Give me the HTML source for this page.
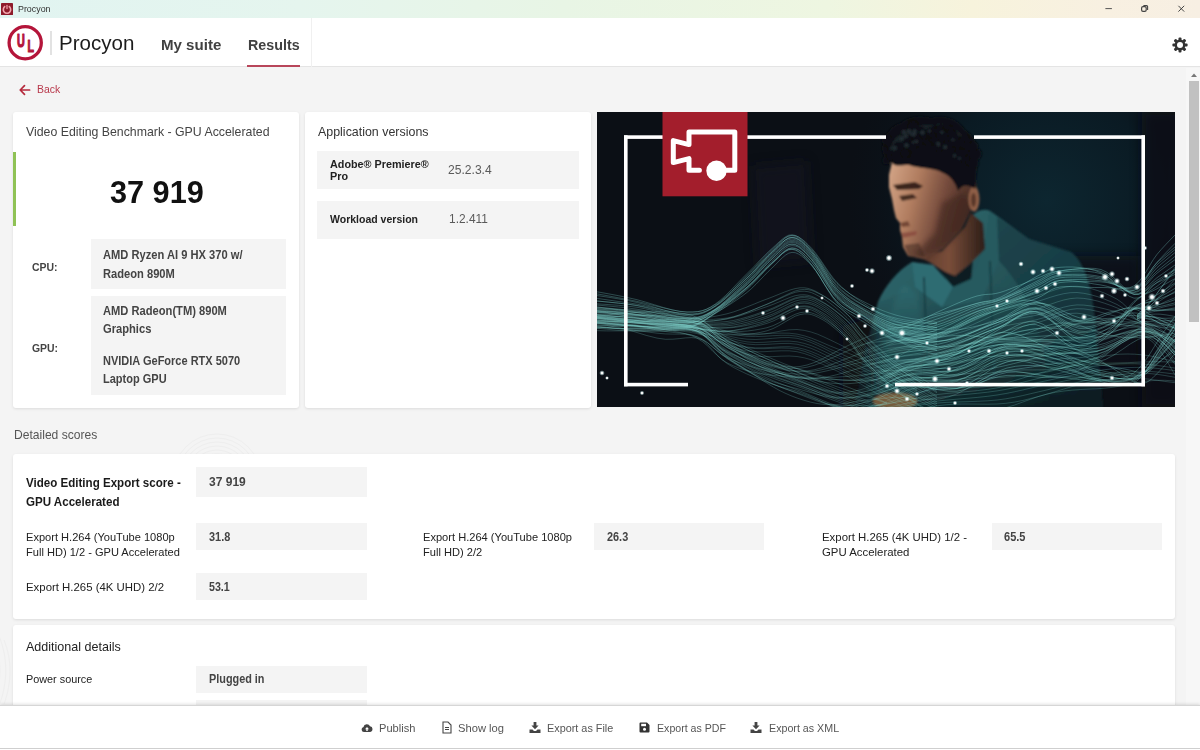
<!DOCTYPE html>
<html lang="en">
<head>
<meta charset="utf-8">
<title>Procyon</title>
<style>
*{box-sizing:border-box;margin:0;padding:0}
html,body{width:1200px;height:750px;overflow:hidden;background:#f4f4f4;font-family:"Liberation Sans","DejaVu Sans",sans-serif;color:#333}
.abs{position:absolute}
#titlebar{position:absolute;left:0;top:0;width:1200px;height:18px;background:linear-gradient(90deg,#e1f4f1 0%,#e5f5ee 25%,#e8f5e5 47%,#eef6e1 69%,#f7f3dc 81%,#f8f0e1 92%,#f7efe3 100%)}
#titlebar .t{position:absolute;left:18px;top:3px;font-size:9.5px;line-height:12px;color:#333}
#header{position:absolute;left:0;top:18px;width:1200px;height:49px;background:#fff;border-bottom:1px solid #e4e4e4}
#navsep{position:absolute;left:311px;top:18px;width:1px;height:49px;background:#f0f0f0}
.nav{position:absolute;top:36px;font-weight:bold;font-size:14.5px;line-height:18px;color:#3c3c3c;white-space:nowrap}
#content{position:absolute;left:0;top:68px;width:1186px;height:638px;background:#f4f4f4}
.card{position:absolute;background:#fff;border-radius:3px;box-shadow:0 1px 3px rgba(0,0,0,.10)}
.box{position:absolute;background:#f4f4f4}
.h{position:absolute;font-size:13px;line-height:16px;color:#3a3a3a;white-space:nowrap}
.b{position:absolute;font-weight:bold;font-size:11.5px;line-height:19px;color:#3f3f3f;white-space:nowrap}
.l{position:absolute;font-size:12px;line-height:15.5px;color:#222;white-space:nowrap}
.v{position:absolute;font-size:13px;line-height:16px;color:#555;white-space:nowrap}
#footer{position:absolute;left:0;top:705px;width:1200px;height:45px;background:#fff;border-top:1px solid #d6d6d6;box-shadow:0 -1px 3px rgba(0,0,0,.12)}
.f{position:absolute;top:721px;font-size:12px;line-height:14px;color:#555;white-space:nowrap}
.tx{position:absolute;white-space:nowrap;transform-origin:0 0}
</style>
</head>
<body>
<!-- title bar -->
<div id="titlebar">
  <svg class="abs" style="left:1px;top:2.700px" width="12" height="12.300" viewBox="0 0 12 12.300"><rect width="12" height="12.300" rx=".8" fill="#8e1b2b"/><path d="M4.300 3.300A3.700 3.700 0 1 0 7.700 3.300" fill="none" stroke="#f3a6ae" stroke-width="1.600" stroke-linecap="butt"/><rect x="5.400" y="1.900" width="1.200" height="4.200" fill="#f3a6ae"/></svg>
  <svg class="abs" style="left:1100px;top:0" width="100" height="18" viewBox="0 0 100 18"><path d="M5.400 8.600h6.500" stroke="#555" stroke-width="1"/><rect x="41.600" y="6.600" width="4.600" height="4.800" rx="1.400" fill="none" stroke="#444" stroke-width="1.200"/><path d="M43.400 5.600h3.200a1 1 0 0 1 1 1v3.400" fill="none" stroke="#444" stroke-width="1.100"/><path d="M78.400 5.800l5.800 5.800M84.200 5.800l-5.800 5.800" stroke="#444" stroke-width="1"/></svg>
</div>
<!-- header -->
<div id="header"></div>
<div id="navsep"></div>
<svg class="abs" style="left:6px;top:24px" width="38" height="38" viewBox="0 0 38 38"><circle cx="19.200" cy="18.700" r="16.100" fill="none" stroke="#b4153a" stroke-width="3.300"/><text transform="translate(11,22.700) scale(.58,.96)" style="font-family:'Liberation Sans',sans-serif;font-weight:bold;font-size:18.600px" fill="#b4153a" stroke="#b4153a" stroke-width="1" vector-effect="non-scaling-stroke" stroke-linejoin="round">U</text><text transform="translate(21.600,27.700) scale(.6,.96)" style="font-family:'Liberation Sans',sans-serif;font-weight:bold;font-size:17.700px" fill="#b4153a" stroke="#b4153a" stroke-width="1" vector-effect="non-scaling-stroke" stroke-linejoin="round">L</text></svg>
<div class="abs" style="left:50px;top:31px;width:2px;height:24px;background:#e2e2e2"></div>
<div class="abs" style="left:247.200px;top:65.200px;width:52.400px;height:2.200px;background:#b8465a"></div>
<svg class="abs" style="left:1171.400px;top:36.100px" width="18" height="18" viewBox="0 0 18 18"><g fill="#333"><circle cx="9" cy="9" r="5.400"/><rect x="7.500" y="1.400" width="3" height="15.200" rx="1" transform="rotate(0 9 9)"/><rect x="7.500" y="1.400" width="3" height="15.200" rx="1" transform="rotate(45 9 9)"/><rect x="7.500" y="1.400" width="3" height="15.200" rx="1" transform="rotate(90 9 9)"/><rect x="7.500" y="1.400" width="3" height="15.200" rx="1" transform="rotate(135 9 9)"/></g><circle cx="9" cy="9" r="3" fill="#fff"/></svg>

<!-- content -->
<div id="content"></div>
<svg id="wm" class="abs" style="left:0;top:68px" width="1186" height="638" viewBox="0 68 1186 638"><g fill="none" stroke="#eeeeee" stroke-width="1"><circle cx="217" cy="478" r="24"/><circle cx="217" cy="478" r="28"/><circle cx="217" cy="478" r="32"/><circle cx="217" cy="478" r="36"/><circle cx="217" cy="478" r="40"/><circle cx="217" cy="478" r="44"/><path d="M-6 640c8 20 8 40 0 62M-1 636c9 22 9 46 0 70M4 640c8 20 8 42 0 64"/></g></svg>
<svg class="abs" style="left:18px;top:83.700px" width="14" height="12" viewBox="0 0 14 12"><path d="M11.600 6H2.600M6.500 1.700L2.200 6l4.300 4.300" fill="none" stroke="#b52a3c" stroke-width="1.700" stroke-linecap="round" stroke-linejoin="round"/></svg>

<!-- card 1 -->
<div class="card" style="left:13px;top:111.700px;width:285.500px;height:296px"></div>
<div class="abs" style="left:13px;top:152px;width:3px;height:74px;background:#8fc255"></div>
<div class="box" style="left:91px;top:239px;width:195px;height:50px"></div>
<div class="box" style="left:91px;top:296px;width:195px;height:99px"></div>

<!-- card 2 -->
<div class="card" style="left:305px;top:111.700px;width:286px;height:296px"></div>
<div class="box" style="left:317px;top:151px;width:262px;height:38px"></div>
<div class="box" style="left:317px;top:201px;width:262px;height:38px"></div>

<!-- hero image -->
<div class="abs" id="hero" style="left:597px;top:111.600px;width:577.800px;height:295.600px;background:#0a131b;overflow:hidden"><div style="position:absolute;left:0;top:-0.600px"><svg width="578" height="297" viewBox="0 0 578 297" style="display:block">
<defs>
<radialGradient id="bgg" cx="450" cy="90" r="200" gradientUnits="userSpaceOnUse"><stop offset="0" stop-color="#0d2630"/><stop offset="0.55" stop-color="#0a1a23"/><stop offset="1" stop-color="#0a121a" stop-opacity="0"/></radialGradient>
<linearGradient id="face" x1="290" y1="70" x2="385" y2="95" gradientUnits="userSpaceOnUse"><stop offset="0" stop-color="#d2a385"/><stop offset="0.3" stop-color="#b07c5f"/><stop offset="0.62" stop-color="#71483a"/><stop offset="1" stop-color="#37231d"/></linearGradient>
<linearGradient id="neck" x1="325" y1="0" x2="392" y2="0" gradientUnits="userSpaceOnUse"><stop offset="0" stop-color="#5e3b2d"/><stop offset="0.4" stop-color="#7a4e3a"/><stop offset="1" stop-color="#241814"/></linearGradient>
<linearGradient id="hood" x1="300" y1="130" x2="470" y2="320" gradientUnits="userSpaceOnUse"><stop offset="0" stop-color="#2f676c"/><stop offset="0.45" stop-color="#235055"/><stop offset="1" stop-color="#112d32"/></linearGradient>
<linearGradient id="armsh" x1="255" y1="0" x2="300" y2="0" gradientUnits="userSpaceOnUse"><stop offset="0" stop-color="#0b1016" stop-opacity=".9"/><stop offset="1" stop-color="#0b1016" stop-opacity="0"/></linearGradient>
<linearGradient id="hdark" x1="0" y1="175" x2="0" y2="297" gradientUnits="userSpaceOnUse"><stop offset="0" stop-color="#081014" stop-opacity="0"/><stop offset="1" stop-color="#081014" stop-opacity=".62"/></linearGradient>
<radialGradient id="glow"><stop offset="0" stop-color="#fff" stop-opacity="1"/><stop offset="0.35" stop-color="#fff" stop-opacity=".85"/><stop offset="1" stop-color="#bff" stop-opacity="0"/></radialGradient>
<filter id="b1" x="-10%" y="-10%" width="120%" height="120%"><feGaussianBlur stdDeviation="1.1"/></filter>
<filter id="b2" x="-40%" y="-40%" width="180%" height="180%"><feGaussianBlur stdDeviation="2.5"/></filter>
<filter id="b3" x="-60%" y="-60%" width="220%" height="220%"><feGaussianBlur stdDeviation="6"/></filter>
</defs>
<rect width="578" height="297" fill="#0b0f15"/>
<rect width="578" height="297" fill="url(#bgg)"/>
<rect x="418" y="145" width="125" height="110" fill="#090f15" opacity=".75" filter="url(#b3)"/>
<rect x="545" y="0" width="40" height="297" fill="#0a0f16" opacity=".8" filter="url(#b3)"/>
<path d="M155,55 L210,50 L215,150 L160,155 Z" fill="#141920" opacity=".55" filter="url(#b3)"/>
<g filter="url(#b1)">
<path d="M372,108 C380,98 390,96 396,102 L432,128 L474,141 C486,150 493,170 497,200 L506,297 L258,297 L268,240 L281,191 C288,175 300,160 315,151 L347,169 L368,164 Z" fill="url(#hood)"/>
<path d="M322,146 L345,140 L368,116 L374,102 L386,112 L388,138 L374,152 L358,165 L346,160 L334,152 Z" fill="url(#neck)"/>
<path d="M343,158 L358,166 L376,150 L374,170 L356,178 Z" fill="#0d1d24"/>
<path d="M315,151 L336,154 L356,176 L374,168 L388,138 L392,100 L400,106 L402,150 L384,190 L345,196 L318,176 Z" fill="#265a5f"/>
<path d="M315,151 L336,154 L356,176 L345,196 L318,176 Z" fill="#33737a" opacity=".7"/>
<path d="M400,106 L432,128 L474,141 C486,150 493,170 497,200 L506,297 L452,297 C452,240 436,185 402,150 Z" fill="#12323a" opacity=".55"/>
<path d="M306,174 L320,182 L330,230 L310,297 L284,297 L288,235 L294,200 Z" fill="#35787d" opacity=".4" filter="url(#b2)"/>
<path d="M246,215 L280,205 L276,300 L246,300 Z" fill="#0b1016" opacity=".75" filter="url(#b3)"/>
<path d="M281,191 L268,240 L258,297 L506,297 L497,200 C493,180 488,160 474,141 L432,128 L402,150 L384,190 L345,196 L318,176 Z" fill="url(#hdark)"/>
<path d="M327,166 L330,250" stroke="#173a40" stroke-width="1.6" fill="none"/><path d="M393,150 L397,262" stroke="#173a40" stroke-width="1.6" fill="none"/>
<path d="M295,51 L292,64 L292,76 L295,88 L297,99 L299,107 L303,112 L303,119 L305,126 L306,136 L311,145 L327,148 L346,138 L364,119 L372,103 L380,84 L378,60 L360,46 L320,44 Z" fill="url(#face)"/>
<path d="M345,92 L368,80 L374,100 L364,119 L346,138 L327,148 L318,142 L338,122 Z" fill="#3a241d" opacity=".55" filter="url(#b2)"/>
<ellipse cx="377" cy="88" rx="5.500" ry="12.500" fill="#8f5e47"/><ellipse cx="376.500" cy="89" rx="2.500" ry="7" fill="#5a3729"/>
<path d="M295,52 C288,48 283,40 286,33 C288,22 296,14 304,12 C314,4 326,5 334,7 C350,3 362,10 368,19 C380,26 384,42 380,56 L378,78 C372,74 366,72 361,80 C358,70 352,64 346,62 C336,56 322,58 312,54 C304,54 298,56 295,52 Z" fill="#0b0e12"/>
<path d="M292,38 C298,22 316,12 338,14 C326,20 308,26 300,44 Z" fill="#1b252a" opacity=".85"/>
<path d="M340,12 C356,12 370,24 374,40 C364,30 352,24 340,22 Z" fill="#141c21" opacity=".9"/>
<g fill="#0b0e12"><circle cx="309.9" cy="30.3" r="4.3"/><circle cx="343.6" cy="28.4" r="3.2"/><circle cx="289.2" cy="49.5" r="3.9"/><circle cx="309.6" cy="42.2" r="4.6"/><circle cx="365.0" cy="33.9" r="5.2"/><circle cx="301.9" cy="36.7" r="6.0"/><circle cx="336.1" cy="29.7" r="5.3"/><circle cx="293.9" cy="44.5" r="5.1"/><circle cx="315.7" cy="14.6" r="6.0"/><circle cx="331.5" cy="28.7" r="6.1"/><circle cx="353.7" cy="39.8" r="4.4"/><circle cx="361.7" cy="31.3" r="6.3"/><circle cx="368.9" cy="26.3" r="3.5"/><circle cx="308.0" cy="42.2" r="4.5"/><circle cx="345.7" cy="20.6" r="4.8"/><circle cx="323.5" cy="20.5" r="5.0"/><circle cx="341.8" cy="35.1" r="5.4"/><circle cx="373.5" cy="48.9" r="6.5"/><circle cx="349.8" cy="18.5" r="6.0"/><circle cx="376.7" cy="52.4" r="5.0"/><circle cx="353.7" cy="21.4" r="5.9"/><circle cx="340.8" cy="18.8" r="3.2"/><circle cx="366.6" cy="48.2" r="3.3"/><circle cx="361.7" cy="30.4" r="3.5"/><circle cx="315.0" cy="34.1" r="6.1"/><circle cx="292.1" cy="41.9" r="3.2"/><circle cx="354.1" cy="24.7" r="6.1"/><circle cx="378.2" cy="43.0" r="6.5"/><circle cx="316.5" cy="15.5" r="5.1"/><circle cx="290.9" cy="31.8" r="4.4"/><circle cx="344.2" cy="16.4" r="3.1"/><circle cx="367.8" cy="31.3" r="6.4"/><circle cx="370.5" cy="34.6" r="4.6"/><circle cx="335.8" cy="27.1" r="5.1"/><circle cx="339.5" cy="27.2" r="6.3"/><circle cx="334.6" cy="21.4" r="5.5"/><circle cx="309.9" cy="24.0" r="6.4"/><circle cx="335.9" cy="24.6" r="3.0"/><circle cx="326.2" cy="25.8" r="3.1"/><circle cx="344.7" cy="28.9" r="3.2"/><circle cx="345.7" cy="24.9" r="5.4"/><circle cx="320.4" cy="30.6" r="5.6"/><circle cx="290.0" cy="28.8" r="5.4"/><circle cx="376.6" cy="35.3" r="4.6"/><circle cx="342.5" cy="20.1" r="4.3"/><circle cx="316.8" cy="23.0" r="5.1"/></g>
<g fill="#27343a" opacity=".8"><circle cx="317.0" cy="23.2" r="2.2"/><circle cx="297.9" cy="36.9" r="2.2"/><circle cx="317.7" cy="20.2" r="2.2"/><circle cx="312.7" cy="21.5" r="1.8"/><circle cx="344.9" cy="21.2" r="1.6"/><circle cx="319.4" cy="30.6" r="1.8"/><circle cx="355.9" cy="28.8" r="1.6"/><circle cx="341.5" cy="33.7" r="1.8"/><circle cx="311.8" cy="20.8" r="1.9"/><circle cx="309.4" cy="34.3" r="2.3"/><circle cx="308.9" cy="25.0" r="2.2"/><circle cx="340.9" cy="32.1" r="1.6"/><circle cx="305.1" cy="27.3" r="2.2"/><circle cx="315.0" cy="23.4" r="1.7"/><circle cx="325.4" cy="21.6" r="2.4"/><circle cx="306.9" cy="21.1" r="2.4"/><circle cx="357.6" cy="44.7" r="1.8"/><circle cx="362.5" cy="47.2" r="1.5"/><circle cx="348.2" cy="36.2" r="2.1"/><circle cx="332.3" cy="19.9" r="1.6"/><circle cx="311.9" cy="19.7" r="2.0"/><circle cx="316.1" cy="31.3" r="1.3"/></g>
<path d="M296,74 L318,71 L326,75 L322,78 L300,79 Z" fill="#24140f" opacity=".85"/>
<path d="M302,85 L316,83 L320,87 L305,90 Z" fill="#2a1812" opacity=".8"/>
<path d="M303,112 L311,110 L313,115 L305,116 Z" fill="#5a3024" opacity=".7"/>
<path d="M304,122 L320,120 L319,124 L306,127 Z" fill="#8a4b40" opacity=".85"/>
<path d="M307,134 L322,132 L328,146 L312,146 Z" fill="#3b261e" opacity=".5"/>
<ellipse cx="298" cy="290" rx="22" ry="8" fill="#80603f" opacity=".9"/>
</g>
<g><path d="M-10.0,179.3 -4.6,180.1 3.0,181.3 11.9,182.9 21.5,184.7 31.1,186.7 40.0,188.7 48.6,191.1 57.5,193.8 66.4,196.5 75.0,198.8 82.9,200.4 90.0,201.2 95.9,201.1 100.8,200.7 105.1,199.8 109.2,198.3 113.4,196.1 118.0,193.2 123.2,189.3 128.6,184.4 134.2,178.8 139.7,173.1 145.0,167.6 150.0,162.6 154.6,158.0 159.0,153.5 163.2,149.0 167.3,144.8 171.2,140.9 175.0,137.5 178.6,134.2 182.0,131.0 185.3,128.1 188.5,125.8 191.7,124.2 195.0,123.8 198.3,124.4 201.5,126.0 204.7,128.4 208.0,131.4 211.4,135.0 215.0,138.9 218.8,143.6 222.9,149.3 227.0,155.5 231.3,161.8 235.6,167.6 240.0,172.5 244.4,176.5 249.0,180.1 253.6,183.3 258.3,186.1 263.1,188.8 268.0,191.4 273.0,193.9 278.1,196.3 283.2,198.6 288.6,200.7 294.2,202.6 300.0,204.4 306.7,206.0 314.2,207.5 322.0,208.7 329.3,209.8 335.6,210.7 340.0,211.3 M-10.0,181.3 -4.6,182.2 3.0,183.4 11.9,185.0 21.5,186.8 31.1,188.6 40.0,190.4 48.6,192.4 57.5,194.7 66.4,196.9 75.0,198.9 82.9,200.3 90.0,200.9 95.9,200.9 100.8,200.6 105.1,199.7 109.2,198.4 113.4,196.4 118.0,193.8 123.2,190.3 128.6,185.8 134.2,180.7 139.7,175.4 145.0,170.2 150.0,165.4 154.6,160.9 159.0,156.4 163.2,151.9 167.3,147.6 171.2,143.5 175.0,139.8 178.6,136.3 182.0,132.8 185.3,129.6 188.5,126.9 191.7,125.1 195.0,124.3 198.3,124.6 201.5,125.9 204.7,128.0 208.0,130.7 211.4,134.0 215.0,137.7 218.8,142.3 222.9,147.9 227.0,154.1 231.3,160.4 235.6,166.3 240.0,171.5 244.4,175.8 249.0,179.7 253.6,183.4 258.3,186.8 263.1,190.0 268.0,193.2 273.0,196.4 278.1,199.4 283.2,202.2 288.6,204.7 294.2,207.0 300.0,208.9 306.7,210.4 314.2,211.5 322.0,212.0 329.3,212.2 335.6,212.3 340.0,212.3 M-10.0,183.2 -4.6,184.0 3.0,185.0 11.9,186.3 21.5,187.9 31.1,189.6 40.0,191.5 48.6,193.6 57.5,196.2 66.4,198.9 75.0,201.1 82.9,202.8 90.0,203.5 95.9,203.4 100.8,202.9 105.1,201.9 109.2,200.2 113.4,198.0 118.0,195.0 123.2,191.1 128.6,186.2 134.2,180.7 139.7,175.0 145.0,169.4 150.0,164.4 154.6,159.7 159.0,155.0 163.2,150.4 167.3,146.1 171.2,142.1 175.0,138.5 178.6,135.2 182.0,131.9 185.3,129.0 188.5,126.6 191.7,125.1 195.0,124.7 198.3,125.4 201.5,127.0 204.7,129.5 208.0,132.6 211.4,136.4 215.0,140.5 218.8,145.4 222.9,151.4 227.0,157.9 231.3,164.4 235.6,170.5 240.0,175.7 244.4,180.0 249.0,183.7 253.6,186.9 258.3,189.9 263.1,192.6 268.0,195.2 273.0,197.7 278.1,200.1 283.2,202.2 288.6,204.2 294.2,205.9 300.0,207.4 306.7,208.7 314.2,209.8 322.0,210.7 329.3,211.6 335.6,212.4 340.0,213.0 M-10.0,185.9 -4.6,186.7 3.0,187.8 11.9,189.1 21.5,190.5 31.1,191.8 40.0,193.2 48.6,194.9 57.5,196.9 66.4,199.0 75.0,200.9 82.9,202.3 90.0,202.9 95.9,202.9 100.8,202.4 105.1,201.4 109.2,199.9 113.4,197.9 118.0,195.2 123.2,191.7 128.6,187.2 134.2,182.2 139.7,176.9 145.0,171.8 150.0,167.0 154.6,162.5 159.0,158.0 163.2,153.4 167.3,149.1 171.2,145.0 175.0,141.4 178.6,137.9 182.0,134.5 185.3,131.4 188.5,128.8 191.7,127.0 195.0,126.3 198.3,126.8 201.5,128.1 204.7,130.3 208.0,133.2 211.4,136.6 215.0,140.5 218.8,145.2 222.9,150.9 227.0,157.2 231.3,163.5 235.6,169.5 240.0,174.6 244.4,178.8 249.0,182.5 253.6,185.9 258.3,189.0 263.1,192.0 268.0,195.0 273.0,198.0 278.1,200.8 283.2,203.6 288.6,206.1 294.2,208.4 300.0,210.5 306.7,212.3 314.2,213.8 322.0,215.0 329.3,215.9 335.6,216.4 340.0,216.9 M-10.0,188.8 -4.6,189.5 3.0,190.3 11.9,191.2 21.5,192.2 31.1,193.2 40.0,194.4 48.6,196.0 57.5,198.0 66.4,200.2 75.0,202.1 82.9,203.6 90.0,204.2 95.9,204.1 100.8,203.5 105.1,202.5 109.2,200.8 113.4,198.6 118.0,195.8 123.2,192.2 128.6,187.6 134.2,182.5 139.7,177.1 145.0,171.8 150.0,167.0 154.6,162.4 159.0,157.7 163.2,153.1 167.3,148.8 171.2,144.7 175.0,141.1 178.6,137.7 182.0,134.3 185.3,131.3 188.5,128.9 191.7,127.2 195.0,126.7 198.3,127.3 201.5,128.9 204.7,131.3 208.0,134.4 211.4,138.0 215.0,142.1 218.8,147.1 222.9,153.1 227.0,159.7 231.3,166.3 235.6,172.5 240.0,177.7 244.4,182.1 249.0,185.8 253.6,189.2 258.3,192.2 263.1,195.0 268.0,197.8 273.0,200.5 278.1,203.1 283.2,205.5 288.6,207.7 294.2,209.6 300.0,211.3 306.7,212.6 314.2,213.7 322.0,214.6 329.3,215.3 335.6,215.9 340.0,216.5 M-10.0,189.3 -4.6,189.7 3.0,190.3 11.9,191.1 21.5,192.1 31.1,193.3 40.0,194.7 48.6,196.6 57.5,199.0 66.4,201.5 75.0,203.9 82.9,205.6 90.0,206.4 95.9,206.4 100.8,205.9 105.1,204.8 109.2,203.1 113.4,200.9 118.0,198.1 123.2,194.4 128.6,189.7 134.2,184.5 139.7,179.1 145.0,173.6 150.0,168.6 154.6,163.8 159.0,159.0 163.2,154.2 167.3,149.6 171.2,145.4 175.0,141.6 178.6,138.0 182.0,134.6 185.3,131.4 188.5,128.8 191.7,127.1 195.0,126.5 198.3,127.0 201.5,128.5 204.7,130.9 208.0,134.0 211.4,137.6 215.0,141.8 218.8,146.8 222.9,152.8 227.0,159.5 231.3,166.3 235.6,172.6 240.0,178.0 244.4,182.5 249.0,186.4 253.6,189.9 258.3,193.1 263.1,196.1 268.0,199.1 273.0,202.0 278.1,204.8 283.2,207.4 288.6,209.7 294.2,211.9 300.0,213.7 306.7,215.1 314.2,216.3 322.0,217.2 329.3,217.9 335.6,218.5 340.0,218.9 M-10.0,192.1 -4.6,192.5 3.0,193.0 11.9,193.6 21.5,194.3 31.1,195.2 40.0,196.3 48.6,197.9 57.5,200.0 66.4,202.4 75.0,204.6 82.9,206.2 90.0,207.0 95.9,206.9 100.8,206.3 105.1,205.2 109.2,203.5 113.4,201.2 118.0,198.4 123.2,194.7 128.6,190.1 134.2,185.0 139.7,179.7 145.0,174.4 150.0,169.4 154.6,164.7 159.0,159.9 163.2,155.2 167.3,150.7 171.2,146.5 175.0,142.8 178.6,139.3 182.0,135.9 185.3,132.8 188.5,130.3 191.7,128.6 195.0,128.0 198.3,128.6 201.5,130.2 204.7,132.6 208.0,135.7 211.4,139.4 215.0,143.6 218.8,148.6 222.9,154.7 227.0,161.4 231.3,168.1 235.6,174.3 240.0,179.6 244.4,184.0 249.0,187.7 253.6,191.0 258.3,193.9 263.1,196.7 268.0,199.5 273.0,202.2 278.1,204.9 283.2,207.5 288.6,209.8 294.2,212.0 300.0,213.9 306.7,215.6 314.2,217.1 322.0,218.4 329.3,219.6 335.6,220.6 340.0,221.4 M-10.0,193.2 -4.6,193.7 3.0,194.3 11.9,195.1 21.5,196.0 31.1,197.0 40.0,198.2 48.6,199.7 57.5,201.7 66.4,203.8 75.0,205.7 82.9,207.1 90.0,207.7 95.9,207.5 100.8,206.7 105.1,205.5 109.2,203.7 113.4,201.4 118.0,198.6 123.2,195.1 128.6,190.7 134.2,185.8 139.7,180.7 145.0,175.7 150.0,170.9 154.6,166.3 159.0,161.6 163.2,156.9 167.3,152.4 171.2,148.2 175.0,144.5 178.6,141.0 182.0,137.5 185.3,134.3 188.5,131.7 191.7,130.0 195.0,129.3 198.3,129.8 201.5,131.2 204.7,133.5 208.0,136.5 211.4,140.1 215.0,144.1 218.8,149.1 222.9,155.1 227.0,161.7 231.3,168.3 235.6,174.6 240.0,179.9 244.4,184.2 249.0,188.0 253.6,191.3 258.3,194.3 263.1,197.3 268.0,200.2 273.0,203.2 278.1,206.1 283.2,208.9 288.6,211.5 294.2,213.9 300.0,216.0 306.7,217.8 314.2,219.4 322.0,220.8 329.3,221.9 335.6,222.8 340.0,223.5 M-10.0,195.2 -4.6,195.7 3.0,196.4 11.9,197.2 21.5,198.1 31.1,199.1 40.0,200.1 48.6,201.5 57.5,203.3 66.4,205.2 75.0,206.9 82.9,208.1 90.0,208.5 95.9,208.1 100.8,207.3 105.1,205.9 109.2,204.0 113.4,201.7 118.0,198.8 123.2,195.3 128.6,191.0 134.2,186.3 139.7,181.3 145.0,176.3 150.0,171.6 154.6,167.1 159.0,162.4 163.2,157.8 167.3,153.3 171.2,149.2 175.0,145.4 178.6,141.9 182.0,138.5 185.3,135.3 188.5,132.8 191.7,131.0 195.0,130.4 198.3,130.9 201.5,132.4 204.7,134.7 208.0,137.7 211.4,141.3 215.0,145.4 218.8,150.3 222.9,156.4 227.0,163.1 231.3,169.8 235.6,176.1 240.0,181.4 244.4,185.7 249.0,189.5 253.6,192.8 258.3,195.8 263.1,198.7 268.0,201.6 273.0,204.6 278.1,207.5 283.2,210.3 288.6,212.9 294.2,215.2 300.0,217.3 306.7,219.2 314.2,220.7 322.0,222.1 329.3,223.2 335.6,224.2 340.0,224.9 M-10.0,196.9 -4.6,197.4 3.0,198.1 11.9,198.8 21.5,199.7 31.1,200.7 40.0,201.7 48.6,203.0 57.5,204.8 66.4,206.5 75.0,208.1 82.9,209.2 90.0,209.5 95.9,209.1 100.8,208.1 105.1,206.6 109.2,204.7 113.4,202.2 118.0,199.3 123.2,195.8 128.6,191.6 134.2,186.9 139.7,182.0 145.0,177.1 150.0,172.5 154.6,167.9 159.0,163.3 163.2,158.7 167.3,154.2 171.2,150.1 175.0,146.4 178.6,142.9 182.0,139.5 185.3,136.4 188.5,133.8 191.7,132.1 195.0,131.4 198.3,132.0 201.5,133.4 204.7,135.8 208.0,138.8 211.4,142.4 215.0,146.5 218.8,151.5 222.9,157.6 227.0,164.3 231.3,171.0 235.6,177.3 240.0,182.7 244.4,187.0 249.0,190.7 253.6,193.9 258.3,196.9 263.1,199.7 268.0,202.6 273.0,205.6 278.1,208.6 283.2,211.4 288.6,214.1 294.2,216.5 300.0,218.7 306.7,220.6 314.2,222.2 322.0,223.7 329.3,225.0 335.6,226.0 340.0,226.8 M-10.0,199.0 -4.6,199.5 3.0,200.1 11.9,200.8 21.5,201.7 31.1,202.5 40.0,203.4 48.6,204.6 57.5,206.1 66.4,207.7 75.0,209.0 82.9,209.9 90.0,210.1 95.9,209.5 100.8,208.4 105.1,206.8 109.2,204.7 113.4,202.3 118.0,199.4 123.2,195.9 128.6,191.8 134.2,187.3 139.7,182.6 145.0,177.8 150.0,173.3 154.6,168.9 159.0,164.4 163.2,159.8 167.3,155.5 171.2,151.4 175.0,147.7 178.6,144.3 182.0,140.9 185.3,137.8 188.5,135.2 191.7,133.5 195.0,132.9 198.3,133.4 201.5,134.9 204.7,137.2 208.0,140.3 211.4,143.9 215.0,147.9 218.8,152.9 222.9,159.0 227.0,165.7 231.3,172.5 235.6,178.8 240.0,184.1 244.4,188.3 249.0,191.9 253.6,195.1 258.3,198.0 263.1,200.8 268.0,203.7 273.0,206.7 278.1,209.6 283.2,212.5 288.6,215.2 294.2,217.7 300.0,219.9 306.7,221.9 314.2,223.6 322.0,225.2 329.3,226.5 335.6,227.6 340.0,228.5 M-10.0,200.5 -4.6,200.9 3.0,201.4 11.9,202.0 21.5,202.7 31.1,203.6 40.0,204.6 48.6,205.9 57.5,207.5 66.4,209.2 75.0,210.7 82.9,211.7 90.0,211.9 95.9,211.2 100.8,210.0 105.1,208.3 109.2,206.2 113.4,203.6 118.0,200.6 123.2,197.0 128.6,192.8 134.2,188.2 139.7,183.4 145.0,178.6 150.0,174.0 154.6,169.5 159.0,164.9 163.2,160.3 167.3,155.8 171.2,151.7 175.0,148.1 178.6,144.6 182.0,141.2 185.3,138.1 188.5,135.6 191.7,133.9 195.0,133.3 198.3,133.9 201.5,135.5 204.7,137.9 208.0,141.0 211.4,144.7 215.0,148.9 218.8,154.0 222.9,160.2 227.0,167.0 231.3,173.8 235.6,180.2 240.0,185.5 244.4,189.8 249.0,193.4 253.6,196.5 258.3,199.3 263.1,202.1 268.0,204.9 273.0,207.8 278.1,210.8 283.2,213.6 288.6,216.3 294.2,218.8 300.0,221.0 306.7,223.0 314.2,224.9 322.0,226.6 329.3,228.2 335.6,229.5 340.0,230.5 M-10.0,202.7 -4.6,203.3 3.0,204.1 11.9,204.9 21.5,205.7 31.1,206.4 40.0,207.0 48.6,207.8 57.5,208.8 66.4,209.9 75.0,210.9 82.9,211.5 90.0,211.5 95.9,210.8 100.8,209.6 105.1,207.9 109.2,205.8 113.4,203.4 118.0,200.6 123.2,197.4 128.6,193.6 134.2,189.3 139.7,184.9 145.0,180.4 150.0,176.1 154.6,171.7 159.0,167.2 163.2,162.6 167.3,158.2 171.2,154.0 175.0,150.2 178.6,146.7 182.0,143.1 185.3,139.9 188.5,137.2 191.7,135.3 195.0,134.6 198.3,135.0 201.5,136.3 204.7,138.5 208.0,141.4 211.4,145.0 215.0,149.0 218.8,154.0 222.9,160.1 227.0,166.8 231.3,173.6 235.6,180.0 240.0,185.4 244.4,189.8 249.0,193.5 253.6,196.8 258.3,199.8 263.1,202.8 268.0,205.9 273.0,209.2 278.1,212.4 283.2,215.6 288.6,218.6 294.2,221.3 300.0,223.8 306.7,225.9 314.2,227.7 322.0,229.3 329.3,230.6 335.6,231.6 340.0,232.4 M-10.0,203.1 -4.6,203.7 3.0,204.7 11.9,205.9 21.5,207.2 31.1,208.4 40.0,209.4 48.6,210.4 57.5,211.6 66.4,212.5 75.0,213.2 82.9,213.4 90.0,212.9 95.9,211.7 100.8,210.2 105.1,208.1 109.2,205.7 113.4,203.0 118.0,200.1 123.2,196.7 128.6,192.8 134.2,188.7 139.7,184.4 145.0,180.2 150.0,176.1 154.6,172.0 159.0,167.7 163.2,163.3 167.3,159.1 171.2,155.2 175.0,151.6 178.6,148.3 182.0,144.9 185.3,141.8 188.5,139.2 191.7,137.5 195.0,136.8 198.3,137.2 201.5,138.6 204.7,140.9 208.0,143.8 211.4,147.3 215.0,151.2 218.8,156.1 222.9,162.1 227.0,168.6 231.3,175.3 235.6,181.4 240.0,186.6 244.4,190.7 249.0,194.2 253.6,197.2 258.3,200.0 263.1,202.8 268.0,205.8 273.0,209.0 278.1,212.3 283.2,215.6 288.6,218.8 294.2,221.8 300.0,224.6 306.7,227.1 314.2,229.4 322.0,231.5 329.3,233.2 335.6,234.5 340.0,235.4 M-10.0,204.5 -4.6,205.0 3.0,205.7 11.9,206.6 21.5,207.7 31.1,208.7 40.0,209.7 48.6,210.8 57.5,212.1 66.4,213.5 75.0,214.6 82.9,215.2 90.0,215.0 95.9,214.1 100.8,212.7 105.1,210.8 109.2,208.4 113.4,205.8 118.0,202.8 123.2,199.5 128.6,195.7 134.2,191.5 139.7,187.1 145.0,182.7 150.0,178.4 154.6,174.1 159.0,169.5 163.2,165.0 167.3,160.5 171.2,156.4 175.0,152.7 178.6,149.2 182.0,145.6 185.3,142.4 188.5,139.8 191.7,137.9 195.0,137.2 198.3,137.6 201.5,139.0 204.7,141.2 208.0,144.2 211.4,147.7 215.0,151.7 218.8,156.7 222.9,162.8 227.0,169.4 231.3,176.2 235.6,182.5 240.0,187.7 244.4,191.9 249.0,195.3 253.6,198.3 258.3,201.1 263.1,203.7 268.0,206.6 273.0,209.7 278.1,212.9 283.2,216.1 288.6,219.1 294.2,221.9 300.0,224.5 306.7,226.9 314.2,229.1 322.0,231.2 329.3,233.0 335.6,234.5 340.0,235.7 M-10.0,207.0 -4.6,207.1 3.0,207.4 11.9,207.9 21.5,208.7 31.1,209.8 40.0,211.0 48.6,212.4 57.5,214.0 66.4,215.5 75.0,216.6 82.9,217.0 90.0,216.6 95.9,215.4 100.8,213.5 105.1,211.2 109.2,208.5 113.4,205.5 118.0,202.2 123.2,198.4 128.6,194.3 134.2,189.9 139.7,185.4 145.0,180.9 150.0,176.6 154.6,172.3 159.0,167.9 163.2,163.6 167.3,159.3 171.2,155.5 175.0,152.0 178.6,148.8 182.0,145.6 185.3,142.7 188.5,140.3 191.7,138.8 195.0,138.4 198.3,139.1 201.5,140.7 204.7,143.2 208.0,146.4 211.4,150.1 215.0,154.3 218.8,159.5 222.9,165.7 227.0,172.5 231.3,179.3 235.6,185.5 240.0,190.7 244.4,194.7 249.0,197.9 253.6,200.6 258.3,203.1 263.1,205.5 268.0,208.1 273.0,211.0 278.1,214.0 283.2,217.1 288.6,220.1 294.2,223.0 300.0,225.8 306.7,228.4 314.2,231.1 322.0,233.7 329.3,236.0 335.6,237.8 340.0,239.2 M-10.0,209.3 -4.6,210.0 3.0,211.0 11.9,212.2 21.5,213.3 31.1,214.3 40.0,215.1 48.6,215.8 57.5,216.6 66.4,217.3 75.0,217.6 82.9,217.4 90.0,216.6 95.9,215.1 100.8,213.1 105.1,210.7 109.2,207.9 113.4,204.9 118.0,201.7 123.2,198.2 128.6,194.2 134.2,190.1 139.7,185.8 145.0,181.5 150.0,177.3 154.6,173.1 159.0,168.7 163.2,164.2 167.3,159.9 171.2,155.9 175.0,152.4 178.6,149.1 182.0,145.8 185.3,142.7 188.5,140.3 191.7,138.6 195.0,138.1 198.3,138.8 201.5,140.4 204.7,142.8 208.0,146.0 211.4,149.8 215.0,154.1 218.8,159.4 222.9,165.8 227.0,172.8 231.3,179.9 235.6,186.5 240.0,192.1 244.4,196.4 249.0,200.0 253.6,203.1 258.3,206.0 263.1,208.7 268.0,211.7 273.0,214.9 278.1,218.1 283.2,221.3 288.6,224.4 294.2,227.2 300.0,229.7 306.7,231.9 314.2,233.9 322.0,235.6 329.3,237.1 335.6,238.4 340.0,239.3 M-10.0,212.9 -4.6,213.5 3.0,214.1 11.9,214.6 21.5,214.9 31.1,215.1 40.0,215.0 48.6,215.1 57.5,215.3 66.4,215.5 75.0,215.7 82.9,215.6 90.0,215.0 95.9,213.9 100.8,212.2 105.1,210.1 109.2,207.7 113.4,205.0 118.0,202.3 123.2,199.3 128.6,196.1 134.2,192.6 139.7,188.9 145.0,185.2 150.0,181.4 154.6,177.5 159.0,173.2 163.2,168.9 167.3,164.6 171.2,160.6 175.0,157.0 178.6,153.5 182.0,150.0 185.3,146.8 188.5,144.1 191.7,142.2 195.0,141.4 198.3,141.7 201.5,143.0 204.7,145.0 208.0,147.8 211.4,151.2 215.0,155.1 218.8,159.9 222.9,165.9 227.0,172.5 231.3,179.1 235.6,185.3 240.0,190.5 244.4,194.5 249.0,197.8 253.6,200.7 258.3,203.3 263.1,206.1 268.0,209.1 273.0,212.5 278.1,216.0 283.2,219.6 288.6,223.2 294.2,226.6 300.0,229.7 306.7,232.8 314.2,235.7 322.0,238.4 329.3,240.7 335.6,242.6 340.0,243.9" fill="none" stroke="#86e3da" stroke-opacity="0.40" stroke-width="0.70"/><path d="M-10.0,200.5 -2.0,200.6 9.3,200.7 22.5,200.7 36.3,200.9 49.3,201.3 60.0,202.0 68.5,202.7 75.9,203.2 82.5,203.8 88.5,204.6 94.3,205.8 100.0,207.6 105.5,210.0 110.4,212.9 115.0,216.2 119.6,219.6 124.5,223.1 130.0,226.5 136.1,229.8 142.8,233.2 149.7,236.6 156.7,239.8 163.5,242.8 170.0,245.6 176.1,248.2 182.0,250.7 187.8,253.0 193.5,255.2 199.2,257.4 205.0,259.5 210.7,261.6 216.1,263.5 221.6,265.4 227.2,267.4 233.3,269.6 240.0,272.0 248.0,275.0 257.4,278.6 267.2,282.5 276.5,286.3 284.4,289.6 290.0,292.0 M-10.0,199.0 -2.0,199.6 9.3,200.4 22.5,201.6 36.3,202.8 49.3,204.1 60.0,205.3 68.5,206.1 75.9,206.7 82.5,207.1 88.5,207.8 94.3,208.8 100.0,210.4 105.5,212.7 110.4,215.5 115.0,218.7 119.6,222.1 124.5,225.6 130.0,228.9 136.1,232.1 142.8,235.4 149.7,238.7 156.7,242.0 163.5,245.1 170.0,248.0 176.1,250.8 182.0,253.4 187.8,255.8 193.5,258.2 199.2,260.6 205.0,262.9 210.7,265.1 216.1,267.2 221.6,269.2 227.2,271.3 233.3,273.4 240.0,275.8 248.0,278.4 257.4,281.5 267.2,284.7 276.5,287.7 284.4,290.4 290.0,292.3 M-10.0,202.4 -2.0,203.2 9.3,204.3 22.5,205.5 36.3,206.7 49.3,207.7 60.0,208.5 68.5,209.0 75.9,209.1 82.5,209.2 88.5,209.4 94.3,210.1 100.0,211.4 105.5,213.5 110.4,216.3 115.0,219.4 119.6,222.8 124.5,226.2 130.0,229.4 136.1,232.4 142.8,235.6 149.7,238.7 156.7,241.9 163.5,245.0 170.0,247.9 176.1,250.6 182.0,253.3 187.8,255.8 193.5,258.3 199.2,260.8 205.0,263.3 210.7,265.7 216.1,268.1 221.6,270.5 227.2,272.9 233.3,275.4 240.0,278.1 248.0,281.2 257.4,284.8 267.2,288.4 276.5,291.8 284.4,294.7 290.0,296.7 M-10.0,204.4 -2.0,205.1 9.3,206.0 22.5,207.1 36.3,208.1 49.3,209.0 60.0,209.7 68.5,210.1 75.9,210.1 82.5,210.2 88.5,210.4 94.3,211.1 100.0,212.5 105.5,214.7 110.4,217.7 115.0,221.1 119.6,224.7 124.5,228.3 130.0,231.6 136.1,234.9 142.8,238.1 149.7,241.4 156.7,244.7 163.5,247.8 170.0,250.7 176.1,253.5 182.0,256.1 187.8,258.5 193.5,261.0 199.2,263.4 205.0,265.8 210.7,268.2 216.1,270.6 221.6,272.9 227.2,275.3 233.3,277.7 240.0,280.4 248.0,283.4 257.4,286.8 267.2,290.2 276.5,293.5 284.4,296.2 290.0,298.2 M-10.0,205.2 -2.0,206.0 9.3,207.0 22.5,208.3 36.3,209.4 49.3,210.2 60.0,210.8 68.5,211.1 75.9,211.0 82.5,211.0 88.5,211.1 94.3,211.8 100.0,213.3 105.5,215.7 110.4,218.9 115.0,222.6 119.6,226.5 124.5,230.5 130.0,234.2 136.1,237.7 142.8,241.3 149.7,244.9 156.7,248.4 163.5,251.7 170.0,254.7 176.1,257.5 182.0,260.0 187.8,262.3 193.5,264.5 199.2,266.7 205.0,268.9 210.7,271.0 216.1,273.2 221.6,275.3 227.2,277.5 233.3,279.8 240.0,282.2 248.0,285.0 257.4,288.2 267.2,291.6 276.5,294.8 284.4,297.6 290.0,299.5 M-10.0,207.2 -2.0,207.8 9.3,208.7 22.5,209.7 36.3,210.6 49.3,211.5 60.0,212.3 68.5,212.6 75.9,212.7 82.5,212.6 88.5,212.9 94.3,213.6 100.0,215.1 105.5,217.7 110.4,221.0 115.0,224.8 119.6,228.9 124.5,232.9 130.0,236.6 136.1,240.1 142.8,243.7 149.7,247.1 156.7,250.5 163.5,253.8 170.0,256.8 176.1,259.5 182.0,262.0 187.8,264.3 193.5,266.6 199.2,268.8 205.0,271.1 210.7,273.4 216.1,275.7 221.6,277.9 227.2,280.2 233.3,282.6 240.0,285.0 248.0,287.7 257.4,290.7 267.2,293.8 276.5,296.7 284.4,299.1 290.0,300.9 M-10.0,209.0 -2.0,209.6 9.3,210.3 22.5,211.2 36.3,212.1 49.3,213.0 60.0,213.7 68.5,214.1 75.9,214.1 82.5,214.0 88.5,214.2 94.3,215.0 100.0,216.5 105.5,219.2 110.4,222.7 115.0,226.7 119.6,231.0 124.5,235.2 130.0,239.1 136.1,242.7 142.8,246.3 149.7,249.8 156.7,253.2 163.5,256.4 170.0,259.4 176.1,262.1 182.0,264.5 187.8,266.7 193.5,268.9 199.2,271.0 205.0,273.3 210.7,275.6 216.1,277.8 221.6,280.1 227.2,282.4 233.3,284.7 240.0,287.2 248.0,289.8 257.4,292.8 267.2,295.8 276.5,298.6 284.4,301.0 290.0,302.7 M-10.0,211.0 -2.0,211.5 9.3,212.1 22.5,212.8 36.3,213.5 49.3,214.2 60.0,214.9 68.5,215.3 75.9,215.3 82.5,215.3 88.5,215.5 94.3,216.4 100.0,218.1 105.5,221.0 110.4,224.7 115.0,229.0 119.6,233.5 124.5,238.0 130.0,242.0 136.1,245.7 142.8,249.3 149.7,252.8 156.7,256.2 163.5,259.3 170.0,262.1 176.1,264.6 182.0,266.8 187.8,268.8 193.5,270.8 199.2,272.8 205.0,274.9 210.7,277.1 216.1,279.3 221.6,281.6 227.2,283.9 233.3,286.3 240.0,288.8 248.0,291.6 257.4,294.8 267.2,298.0 276.5,300.9 284.4,303.4 290.0,305.2 M-10.0,211.9 -2.0,212.2 9.3,212.8 22.5,213.6 36.3,214.5 49.3,215.5 60.0,216.5 68.5,217.0 75.9,217.1 82.5,217.1 88.5,217.4 94.3,218.3 100.0,220.1 105.5,223.0 110.4,226.9 115.0,231.4 119.6,236.1 124.5,240.7 130.0,244.8 136.1,248.5 142.8,252.2 149.7,255.7 156.7,259.0 163.5,262.0 170.0,264.8 176.1,267.2 182.0,269.4 187.8,271.3 193.5,273.1 199.2,275.0 205.0,277.0 210.7,279.1 216.1,281.3 221.6,283.5 227.2,285.8 233.3,288.1 240.0,290.5 248.0,293.2 257.4,296.2 267.2,299.3 276.5,302.3 284.4,304.8 290.0,306.6 M-10.0,214.7 -2.0,215.5 9.3,216.4 22.5,217.3 36.3,218.0 49.3,218.6 60.0,218.9 68.5,218.9 75.9,218.5 82.5,218.0 88.5,217.9 94.3,218.4 100.0,220.0 105.5,222.8 110.4,226.7 115.0,231.3 119.6,236.1 124.5,240.8 130.0,245.1 136.1,249.0 142.8,252.9 149.7,256.6 156.7,260.3 163.5,263.7 170.0,266.9 176.1,269.7 182.0,272.1 187.8,274.3 193.5,276.4 199.2,278.5 205.0,280.7 210.7,283.1 216.1,285.4 221.6,287.8 227.2,290.1 233.3,292.5 240.0,294.7 248.0,297.1 257.4,299.7 267.2,302.2 276.5,304.5 284.4,306.4 290.0,307.8 M-10.0,216.0 -2.0,217.0 9.3,218.2 22.5,219.4 36.3,220.1 49.3,220.5 60.0,220.6 68.5,220.4 75.9,219.7 82.5,219.1 88.5,218.9 94.3,219.4 100.0,221.0 105.5,223.9 110.4,228.0 115.0,232.9 119.6,238.0 124.5,243.0 130.0,247.5 136.1,251.7 142.8,255.8 149.7,259.9 156.7,263.7 163.5,267.3 170.0,270.5 176.1,273.3 182.0,275.6 187.8,277.7 193.5,279.5 199.2,281.4 205.0,283.3 210.7,285.4 216.1,287.4 221.6,289.5 227.2,291.6 233.3,293.6 240.0,295.6 248.0,297.6 257.4,299.9 267.2,302.4 276.5,304.8 284.4,307.0 290.0,308.7 M-10.0,215.3 -2.0,215.7 9.3,216.4 22.5,217.6 36.3,219.2 49.3,220.8 60.0,222.2 68.5,222.9 75.9,223.1 82.5,223.1 88.5,223.3 94.3,224.1 100.0,226.0 105.5,229.1 110.4,233.4 115.0,238.2 119.6,243.4 124.5,248.3 130.0,252.5 136.1,256.2 142.8,259.6 149.7,262.9 156.7,265.9 163.5,268.7 170.0,271.2 176.1,273.4 182.0,275.2 187.8,276.8 193.5,278.4 199.2,280.0 205.0,282.0 210.7,284.2 216.1,286.6 221.6,289.1 227.2,291.7 233.3,294.3 240.0,297.0 248.0,299.9 257.4,303.2 267.2,306.5 276.5,309.5 284.4,312.0 290.0,313.7" fill="none" stroke="#86e3da" stroke-opacity="0.32" stroke-width="0.70"/><path d="M-10.0,194.5 -4.5,195.3 3.0,196.3 12.0,197.4 21.6,198.7 31.2,199.9 40.0,201.0 48.2,202.3 56.4,203.7 64.5,205.2 72.5,206.5 80.4,207.4 88.0,207.8 95.4,207.7 102.5,207.3 109.5,206.6 116.4,205.6 123.2,204.3 130.0,202.8 136.9,200.8 143.7,198.4 150.6,195.7 157.3,193.0 163.8,190.3 170.0,188.0 176.0,185.7 181.9,183.3 187.6,181.0 193.1,179.0 198.2,177.6 203.0,176.8 207.3,176.8 211.0,177.4 214.5,178.5 217.9,179.9 221.3,181.8 225.0,183.8 229.1,186.3 233.3,189.2 237.6,192.5 241.9,196.0 246.1,199.5 250.0,203.1 253.5,206.6 256.7,210.2 259.7,213.9 262.8,217.8 266.1,221.7 270.0,225.7 274.3,229.9 278.9,234.3 283.8,238.7 288.9,243.2 294.3,247.6 300.0,251.9 306.6,256.5 314.1,261.3 321.9,266.0 329.3,270.3 335.5,274.0 340.0,276.6 M-10.0,197.1 -4.5,197.4 3.0,197.8 12.0,198.1 21.6,198.4 31.2,198.7 40.0,199.3 48.2,200.1 56.4,201.4 64.5,202.8 72.5,204.4 80.4,205.8 88.0,206.8 95.4,207.6 102.5,208.1 109.5,208.3 116.4,208.3 123.2,207.8 130.0,207.0 136.9,205.6 143.7,203.6 150.6,201.1 157.3,198.4 163.8,195.7 170.0,193.1 176.0,190.4 181.9,187.5 187.6,184.7 193.1,182.1 198.2,180.0 203.0,178.8 207.3,178.4 211.0,178.6 214.5,179.4 217.9,180.7 221.3,182.3 225.0,184.2 229.1,186.5 233.3,189.2 237.6,192.4 241.9,195.9 246.1,199.5 250.0,203.1 253.5,206.7 256.7,210.4 259.7,214.3 262.8,218.3 266.1,222.4 270.0,226.6 274.3,231.0 278.9,235.5 283.8,240.2 288.9,244.9 294.3,249.5 300.0,254.0 306.6,258.7 314.1,263.7 321.9,268.4 329.3,272.7 335.5,276.3 340.0,278.8 M-10.0,195.7 -4.5,196.2 3.0,196.9 12.0,197.8 21.6,199.0 31.2,200.3 40.0,201.6 48.2,203.1 56.4,204.7 64.5,206.4 72.5,207.9 80.4,209.1 88.0,209.9 95.4,210.3 102.5,210.4 109.5,210.2 116.4,209.8 123.2,208.9 130.0,207.7 136.9,205.9 143.7,203.6 150.6,201.1 157.3,198.4 163.8,195.7 170.0,193.3 176.0,190.8 181.9,188.1 187.6,185.5 193.1,183.1 198.2,181.3 203.0,180.4 207.3,180.2 211.0,180.7 214.5,181.6 217.9,183.1 221.3,184.9 225.0,186.9 229.1,189.4 233.3,192.4 237.6,195.7 241.9,199.3 246.1,202.9 250.0,206.6 253.5,210.2 256.7,214.0 259.7,217.8 262.8,221.8 266.1,225.8 270.0,229.9 274.3,234.2 278.9,238.6 283.8,243.1 288.9,247.5 294.3,252.0 300.0,256.3 306.6,260.8 314.1,265.5 321.9,270.1 329.3,274.4 335.5,277.9 340.0,280.5 M-10.0,197.5 -4.5,198.0 3.0,198.8 12.0,199.7 21.6,200.9 31.2,202.2 40.0,203.5 48.2,204.8 56.4,206.2 64.5,207.6 72.5,208.8 80.4,209.7 88.0,210.2 95.4,210.4 102.5,210.5 109.5,210.3 116.4,209.8 123.2,209.1 130.0,208.0 136.9,206.4 143.7,204.5 150.6,202.2 157.3,199.9 163.8,197.7 170.0,195.6 176.0,193.4 181.9,191.0 187.6,188.6 193.1,186.4 198.2,184.7 203.0,183.9 207.3,183.8 211.0,184.3 214.5,185.3 217.9,186.7 221.3,188.5 225.0,190.5 229.1,192.9 233.3,195.8 237.6,199.0 241.9,202.4 246.1,205.9 250.0,209.4 253.5,212.8 256.7,216.4 259.7,220.1 262.8,223.9 266.1,227.7 270.0,231.6 274.3,235.6 278.9,239.7 283.8,243.9 288.9,248.2 294.3,252.4 300.0,256.5 306.6,260.9 314.1,265.7 321.9,270.5 329.3,275.0 335.5,278.9 340.0,281.8 M-10.0,200.7 -4.5,201.0 3.0,201.5 12.0,202.0 21.6,202.6 31.2,203.3 40.0,204.0 48.2,204.8 56.4,205.8 64.5,206.8 72.5,207.8 80.4,208.8 88.0,209.5 95.4,210.1 102.5,210.7 109.5,211.1 116.4,211.2 123.2,211.1 130.0,210.5 136.9,209.4 143.7,207.8 150.6,205.9 157.3,203.8 163.8,201.5 170.0,199.4 176.0,197.0 181.9,194.3 187.6,191.5 193.1,188.9 198.2,186.9 203.0,185.7 207.3,185.3 211.0,185.6 214.5,186.4 217.9,187.6 221.3,189.3 225.0,191.2 229.1,193.5 233.3,196.3 237.6,199.4 241.9,202.9 246.1,206.4 250.0,209.9 253.5,213.5 256.7,217.2 259.7,221.1 262.8,225.0 266.1,229.0 270.0,233.1 274.3,237.3 278.9,241.6 283.8,246.1 288.9,250.6 294.3,255.1 300.0,259.5 306.6,264.1 314.1,269.1 321.9,274.0 329.3,278.5 335.5,282.4 340.0,285.1 M-10.0,201.9 -4.5,202.2 3.0,202.7 12.0,203.3 21.6,204.0 31.2,204.7 40.0,205.5 48.2,206.3 56.4,207.3 64.5,208.4 72.5,209.4 80.4,210.3 88.0,211.0 95.4,211.7 102.5,212.3 109.5,212.7 116.4,212.9 123.2,212.7 130.0,212.1 136.9,210.9 143.7,209.2 150.6,207.2 157.3,205.0 163.8,202.7 170.0,200.5 176.0,198.1 181.9,195.3 187.6,192.5 193.1,189.9 198.2,187.9 203.0,186.8 207.3,186.6 211.0,187.0 214.5,187.9 217.9,189.3 221.3,191.1 225.0,193.1 229.1,195.6 233.3,198.7 237.6,202.0 241.9,205.7 246.1,209.4 250.0,213.1 253.5,216.8 256.7,220.6 259.7,224.6 262.8,228.6 266.1,232.7 270.0,236.8 274.3,241.0 278.9,245.3 283.8,249.6 288.9,254.0 294.3,258.3 300.0,262.4 306.6,266.8 314.1,271.3 321.9,275.9 329.3,280.1 335.5,283.7 340.0,286.3 M-10.0,203.4 -4.5,203.8 3.0,204.3 12.0,205.0 21.6,205.7 31.2,206.5 40.0,207.2 48.2,207.9 56.4,208.7 64.5,209.5 72.5,210.3 80.4,211.0 88.0,211.6 95.4,212.2 102.5,212.9 109.5,213.4 116.4,213.8 123.2,213.8 130.0,213.4 136.9,212.4 143.7,210.9 150.6,209.1 157.3,207.1 163.8,205.0 170.0,202.9 176.0,200.5 181.9,197.7 187.6,194.9 193.1,192.2 198.2,190.1 203.0,188.9 207.3,188.6 211.0,188.9 214.5,189.8 217.9,191.2 221.3,192.9 225.0,195.0 229.1,197.5 233.3,200.5 237.6,203.9 241.9,207.5 246.1,211.2 250.0,215.0 253.5,218.7 256.7,222.6 259.7,226.6 262.8,230.6 266.1,234.7 270.0,238.9 274.3,243.1 278.9,247.5 283.8,251.9 288.9,256.3 294.3,260.7 300.0,264.9 306.6,269.3 314.1,273.9 321.9,278.5 329.3,282.7 335.5,286.2 340.0,288.8 M-10.0,204.8 -4.5,205.3 3.0,205.8 12.0,206.5 21.6,207.2 31.2,207.9 40.0,208.6 48.2,209.2 56.4,209.8 64.5,210.5 72.5,211.1 80.4,211.7 88.0,212.3 95.4,212.9 102.5,213.6 109.5,214.4 116.4,214.9 123.2,215.1 130.0,214.8 136.9,214.0 143.7,212.7 150.6,211.1 157.3,209.2 163.8,207.2 170.0,205.2 176.0,202.9 181.9,200.1 187.6,197.2 193.1,194.5 198.2,192.3 203.0,191.1 207.3,190.7 211.0,191.0 214.5,191.9 217.9,193.2 221.3,194.9 225.0,197.0 229.1,199.5 233.3,202.5 237.6,205.9 241.9,209.5 246.1,213.3 250.0,217.0 253.5,220.8 256.7,224.7 259.7,228.7 262.8,232.8 266.1,236.9 270.0,241.1 274.3,245.4 278.9,249.7 283.8,254.1 288.9,258.5 294.3,262.8 300.0,267.1 306.6,271.5 314.1,276.1 321.9,280.7 329.3,284.9 335.5,288.4 340.0,291.0 M-10.0,206.4 -4.5,206.7 3.0,207.2 12.0,207.7 21.6,208.3 31.2,209.0 40.0,209.6 48.2,210.3 56.4,210.9 64.5,211.5 72.5,212.2 80.4,212.8 88.0,213.4 95.4,214.2 102.5,215.1 109.5,216.0 116.4,216.6 123.2,216.9 130.0,216.6 136.9,215.8 143.7,214.5 150.6,212.8 157.3,210.9 163.8,208.9 170.0,206.9 176.0,204.5 181.9,201.6 187.6,198.6 193.1,195.8 198.2,193.6 203.0,192.4 207.3,192.1 211.0,192.5 214.5,193.4 217.9,194.8 221.3,196.6 225.0,198.8 229.1,201.4 233.3,204.5 237.6,208.1 241.9,211.9 246.1,215.8 250.0,219.6 253.5,223.5 256.7,227.5 259.7,231.6 262.8,235.7 266.1,239.9 270.0,244.1 274.3,248.4 278.9,252.7 283.8,257.1 288.9,261.4 294.3,265.6 300.0,269.7 306.6,273.9 314.1,278.4 321.9,282.8 329.3,286.8 335.5,290.2 340.0,292.8 M-10.0,207.9 -4.5,208.5 3.0,209.2 12.0,210.1 21.6,210.9 31.2,211.6 40.0,212.2 48.2,212.6 56.4,212.9 64.5,213.1 72.5,213.3 80.4,213.5 88.0,213.8 95.4,214.3 102.5,215.1 109.5,216.0 116.4,216.7 123.2,217.1 130.0,217.1 136.9,216.5 143.7,215.5 150.6,214.2 157.3,212.6 163.8,211.0 170.0,209.2 176.0,207.0 181.9,204.3 187.6,201.3 193.1,198.6 198.2,196.4 203.0,195.2 207.3,194.9 211.0,195.2 214.5,196.1 217.9,197.5 221.3,199.3 225.0,201.4 229.1,203.9 233.3,207.0 237.6,210.5 241.9,214.3 246.1,218.1 250.0,221.9 253.5,225.7 256.7,229.7 259.7,233.8 262.8,237.9 266.1,242.1 270.0,246.3 274.3,250.4 278.9,254.7 283.8,259.0 288.9,263.3 294.3,267.5 300.0,271.6 306.6,275.8 314.1,280.2 321.9,284.6 329.3,288.7 335.5,292.2 340.0,294.7 M-10.0,210.2 -4.5,210.5 3.0,210.7 12.0,210.9 21.6,211.1 31.2,211.4 40.0,211.8 48.2,212.2 56.4,212.6 64.5,213.1 72.5,213.7 80.4,214.4 88.0,215.2 95.4,216.2 102.5,217.5 109.5,218.7 116.4,219.7 123.2,220.2 130.0,220.1 136.9,219.3 143.7,218.1 150.6,216.4 157.3,214.6 163.8,212.6 170.0,210.6 176.0,208.1 181.9,205.2 187.6,202.1 193.1,199.3 198.2,197.1 203.0,196.0 207.3,195.8 211.0,196.2 214.5,197.3 217.9,198.8 221.3,200.7 225.0,203.0 229.1,205.8 233.3,209.1 237.6,212.8 241.9,216.7 246.1,220.7 250.0,224.6 253.5,228.5 256.7,232.5 259.7,236.7 262.8,240.8 266.1,245.0 270.0,249.1 274.3,253.3 278.9,257.4 283.8,261.6 288.9,265.8 294.3,269.8 300.0,273.8 306.6,277.9 314.1,282.3 321.9,286.7 329.3,290.9 335.5,294.5 340.0,297.1 M-10.0,210.0 -4.5,210.6 3.0,211.4 12.0,212.5 21.6,213.5 31.2,214.5 40.0,215.3 48.2,215.7 56.4,216.0 64.5,216.1 72.5,216.1 80.4,216.2 88.0,216.5 95.4,217.0 102.5,217.9 109.5,218.9 116.4,219.8 123.2,220.3 130.0,220.2 136.9,219.6 143.7,218.6 150.6,217.3 157.3,215.8 163.8,214.1 170.0,212.3 176.0,210.1 181.9,207.2 187.6,204.2 193.1,201.3 198.2,199.1 203.0,197.8 207.3,197.6 211.0,198.0 214.5,199.0 217.9,200.5 221.3,202.5 225.0,204.8 229.1,207.6 233.3,210.9 237.6,214.7 241.9,218.8 246.1,222.9 250.0,226.9 253.5,231.0 256.7,235.2 259.7,239.5 262.8,243.8 266.1,248.1 270.0,252.4 274.3,256.7 278.9,261.1 283.8,265.4 288.9,269.6 294.3,273.8 300.0,277.7 306.6,281.7 314.1,285.7 321.9,289.7 329.3,293.3 335.5,296.4 340.0,298.7 M-10.0,211.0 -4.5,211.6 3.0,212.5 12.0,213.8 21.6,215.1 31.2,216.3 40.0,217.1 48.2,217.5 56.4,217.4 64.5,217.1 72.5,216.7 80.4,216.3 88.0,216.1 95.4,216.5 102.5,217.3 109.5,218.4 116.4,219.5 123.2,220.4 130.0,220.9 136.9,220.8 143.7,220.5 150.6,220.0 157.3,219.1 163.8,218.0 170.0,216.7 176.0,214.7 181.9,211.9 187.6,208.8 193.1,205.8 198.2,203.3 203.0,201.7 207.3,201.1 211.0,201.2 214.5,201.9 217.9,203.1 221.3,204.6 225.0,206.5 229.1,208.9 233.3,211.9 237.6,215.2 241.9,218.9 246.1,222.7 250.0,226.6 253.5,230.5 256.7,234.6 259.7,238.8 262.8,243.1 266.1,247.5 270.0,251.9 274.3,256.3 278.9,260.9 283.8,265.5 288.9,270.2 294.3,274.8 300.0,279.4 306.6,284.1 314.1,288.9 321.9,293.6 329.3,297.8 335.5,301.1 340.0,303.5 M-10.0,215.9 -4.5,216.4 3.0,216.9 12.0,217.3 21.6,217.5 31.2,217.5 40.0,217.3 48.2,216.8 56.4,216.2 64.5,215.5 72.5,214.9 80.4,214.7 88.0,215.0 95.4,215.9 102.5,217.5 109.5,219.3 116.4,221.1 123.2,222.6 130.0,223.6 136.9,223.9 143.7,223.8 150.6,223.3 157.3,222.5 163.8,221.3 170.0,219.8 176.0,217.6 181.9,214.6 187.6,211.2 193.1,208.0 198.2,205.2 203.0,203.6 207.3,202.9 211.0,202.9 214.5,203.6 217.9,204.8 221.3,206.4 225.0,208.3 229.1,210.7 233.3,213.7 237.6,217.2 241.9,220.9 246.1,224.8 250.0,228.7 253.5,232.6 256.7,236.8 259.7,241.0 262.8,245.4 266.1,249.7 270.0,254.0 274.3,258.4 278.9,262.8 283.8,267.3 288.9,271.8 294.3,276.3 300.0,280.6 306.6,285.2 314.1,289.9 321.9,294.6 329.3,298.9 335.5,302.5 340.0,305.2" fill="none" stroke="#86e3da" stroke-opacity="0.34" stroke-width="0.70"/><path d="M-10.0,198.6 -3.4,199.8 5.9,201.1 16.9,202.4 28.5,203.3 39.9,203.8 50.0,204.3 58.9,205.0 67.4,205.9 75.6,207.2 83.7,208.7 91.8,210.4 100.0,212.2 108.3,214.3 116.7,216.6 125.0,218.9 133.3,221.0 141.7,222.7 150.0,223.8 158.4,223.9 167.0,223.0 175.6,221.6 184.1,220.0 192.2,218.8 200.0,218.5 207.2,219.4 214.1,221.0 220.6,223.2 227.0,226.0 233.4,229.0 240.0,232.2 246.7,235.5 253.3,239.2 260.0,243.1 266.7,247.1 273.3,251.2 280.0,255.2 287.1,259.4 294.8,263.9 302.5,268.2 309.6,272.1 315.6,275.2 320.0,277.3 M-10.0,199.0 -3.4,199.2 5.9,199.6 16.9,200.6 28.5,202.0 39.9,203.9 50.0,205.9 58.9,207.8 67.4,209.7 75.6,211.5 83.7,213.2 91.8,214.6 100.0,215.8 108.3,216.9 116.7,218.2 125.0,219.5 133.3,220.7 141.7,221.8 150.0,222.7 158.4,223.0 167.0,222.8 175.6,222.3 184.1,222.1 192.2,222.2 200.0,223.1 207.2,224.8 214.1,227.0 220.6,229.6 227.0,232.3 233.4,235.1 240.0,237.7 246.7,240.2 253.3,243.0 260.0,245.9 266.7,249.0 273.3,252.2 280.0,255.6 287.1,259.4 294.8,263.7 302.5,268.3 309.6,272.6 315.6,276.3 320.0,279.0 M-10.0,200.5 -3.4,201.0 5.9,201.9 16.9,203.1 28.5,204.6 39.9,206.3 50.0,207.8 58.9,209.3 67.4,210.8 75.6,212.2 83.7,213.6 91.8,215.0 100.0,216.3 108.3,217.7 116.7,219.4 125.0,221.2 133.3,222.9 141.7,224.3 150.0,225.3 158.4,225.6 167.0,225.3 175.6,224.7 184.1,224.3 192.2,224.3 200.0,225.2 207.2,227.0 214.1,229.4 220.6,232.2 227.0,235.2 233.4,238.3 240.0,241.2 246.7,244.1 253.3,247.1 260.0,250.2 266.7,253.4 273.3,256.5 280.0,259.7 287.1,263.2 294.8,267.0 302.5,270.9 309.6,274.7 315.6,278.0 320.0,280.4 M-10.0,202.7 -3.4,203.2 5.9,204.0 16.9,204.9 28.5,206.1 39.9,207.4 50.0,208.8 58.9,210.1 67.4,211.5 75.6,212.8 83.7,214.3 91.8,215.7 100.0,217.3 108.3,219.1 116.7,221.2 125.0,223.4 133.3,225.4 141.7,227.1 150.0,228.2 158.4,228.5 167.0,228.0 175.6,227.3 184.1,226.6 192.2,226.5 200.0,227.3 207.2,229.1 214.1,231.5 220.6,234.3 227.0,237.4 233.4,240.7 240.0,243.9 246.7,247.0 253.3,250.3 260.0,253.7 266.7,257.1 273.3,260.5 280.0,263.8 287.1,267.3 294.8,271.1 302.5,274.9 309.6,278.4 315.6,281.4 320.0,283.6 M-10.0,205.2 -3.4,205.8 5.9,206.5 16.9,207.4 28.5,208.4 39.9,209.4 50.0,210.3 58.9,211.3 67.4,212.3 75.6,213.3 83.7,214.4 91.8,215.8 100.0,217.3 108.3,219.4 116.7,221.9 125.0,224.5 133.3,227.1 141.7,229.3 150.0,230.9 158.4,231.5 167.0,231.3 175.6,230.7 184.1,230.2 192.2,230.1 200.0,230.8 207.2,232.4 214.1,234.6 220.6,237.3 227.0,240.3 233.4,243.4 240.0,246.4 246.7,249.4 253.3,252.6 260.0,256.0 266.7,259.4 273.3,262.8 280.0,266.2 287.1,269.8 294.8,273.8 302.5,277.7 309.6,281.4 315.6,284.5 320.0,286.7 M-10.0,206.8 -3.4,207.4 5.9,208.1 16.9,209.0 28.5,210.0 39.9,211.0 50.0,212.0 58.9,212.9 67.4,213.8 75.6,214.7 83.7,215.8 91.8,217.0 100.0,218.6 108.3,220.7 116.7,223.3 125.0,226.2 133.3,229.0 141.7,231.3 150.0,233.0 158.4,233.7 167.0,233.5 175.6,233.0 184.1,232.5 192.2,232.4 200.0,233.2 207.2,235.0 214.1,237.3 220.6,240.1 227.0,243.2 233.4,246.3 240.0,249.5 246.7,252.6 253.3,255.9 260.0,259.3 266.7,262.8 273.3,266.3 280.0,269.7 287.1,273.2 294.8,277.1 302.5,280.9 309.6,284.4 315.6,287.4 320.0,289.6 M-10.0,208.0 -3.4,208.5 5.9,209.2 16.9,210.0 28.5,211.0 39.9,212.1 50.0,213.1 58.9,214.0 67.4,214.9 75.6,215.8 83.7,216.8 91.8,218.1 100.0,219.8 108.3,222.1 116.7,225.1 125.0,228.3 133.3,231.4 141.7,234.1 150.0,236.0 158.4,236.8 167.0,236.8 175.6,236.3 184.1,235.8 192.2,235.7 200.0,236.5 207.2,238.2 214.1,240.5 220.6,243.2 227.0,246.2 233.4,249.3 240.0,252.3 246.7,255.4 253.3,258.6 260.0,261.9 266.7,265.3 273.3,268.7 280.0,272.0 287.1,275.5 294.8,279.2 302.5,283.0 309.6,286.4 315.6,289.4 320.0,291.5 M-10.0,210.8 -3.4,211.4 5.9,212.3 16.9,213.2 28.5,214.2 39.9,215.2 50.0,216.0 58.9,216.6 67.4,217.1 75.6,217.6 83.7,218.2 91.8,219.1 100.0,220.5 108.3,222.7 116.7,225.6 125.0,228.8 133.3,232.0 141.7,234.7 150.0,236.7 158.4,237.6 167.0,237.7 175.6,237.3 184.1,237.0 192.2,237.2 200.0,238.2 207.2,240.2 214.1,242.7 220.6,245.7 227.0,248.9 233.4,252.3 240.0,255.6 246.7,258.9 253.3,262.4 260.0,265.9 266.7,269.5 273.3,273.1 280.0,276.5 287.1,280.1 294.8,283.8 302.5,287.5 309.6,290.9 315.6,293.7 320.0,295.8 M-10.0,210.9 -3.4,211.5 5.9,212.4 16.9,213.5 28.5,214.8 39.9,216.1 50.0,217.2 58.9,218.1 67.4,218.7 75.6,219.3 83.7,220.0 91.8,221.1 100.0,222.6 108.3,225.0 116.7,228.2 125.0,231.6 133.3,235.0 141.7,237.9 150.0,239.9 158.4,240.8 167.0,240.7 175.6,240.2 184.1,239.8 192.2,239.8 200.0,240.7 207.2,242.5 214.1,245.0 220.6,247.9 227.0,251.0 233.4,254.3 240.0,257.6 246.7,261.0 253.3,264.5 260.0,268.1 266.7,271.8 273.3,275.5 280.0,279.0 287.1,282.6 294.8,286.5 302.5,290.3 309.6,293.7 315.6,296.6 320.0,298.7 M-10.0,213.4 -3.4,214.4 5.9,215.8 16.9,217.3 28.5,218.5 39.9,219.1 50.0,219.3 58.9,219.1 67.4,218.6 75.6,218.2 83.7,218.1 91.8,218.6 100.0,220.0 108.3,222.7 116.7,226.6 125.0,231.1 133.3,235.8 141.7,240.0 150.0,243.2 158.4,245.0 167.0,245.7 175.6,245.6 184.1,245.2 192.2,245.0 200.0,245.5 207.2,246.8 214.1,248.7 220.6,251.1 227.0,253.9 233.4,256.9 240.0,260.0 246.7,263.3 253.3,266.9 260.0,270.7 266.7,274.7 273.3,278.6 280.0,282.5 287.1,286.4 294.8,290.4 302.5,294.2 309.6,297.4 315.6,300.0 320.0,301.8" fill="none" stroke="#86e3da" stroke-opacity="0.29" stroke-width="0.70"/><path d="M540.0,204.2 541.3,203.1 543.0,201.7 545.1,199.9 547.4,197.9 549.7,195.6 552.0,193.2 554.2,190.6 556.3,187.7 558.6,184.6 560.9,181.3 563.4,177.7 566.0,173.9 569.1,169.4 572.7,164.2 576.4,158.7 579.9,153.4 582.9,148.9 585.0,145.7 M540.0,203.9 541.3,202.7 543.0,201.1 545.1,199.2 547.4,197.0 549.7,194.7 552.0,192.2 554.2,189.7 556.3,187.0 558.6,184.1 560.9,181.0 563.4,177.8 566.0,174.4 569.1,170.5 572.7,166.0 576.4,161.4 579.9,157.1 582.9,153.4 585.0,150.8 M540.0,205.8 541.3,204.8 543.0,203.5 545.1,201.9 547.4,200.2 549.7,198.2 552.0,196.2 554.2,194.1 556.3,191.8 558.6,189.3 560.9,186.8 563.4,184.0 566.0,181.2 569.1,177.8 572.7,174.0 576.4,169.9 579.9,166.1 582.9,162.9 585.0,160.5 M540.0,204.5 541.3,203.6 543.0,202.3 545.1,200.8 547.4,199.2 549.7,197.4 552.0,195.6 554.2,193.8 556.3,191.9 558.6,189.8 560.9,187.7 563.4,185.5 566.0,183.1 569.1,180.5 572.7,177.5 576.4,174.3 579.9,171.4 582.9,168.9 585.0,167.1 M540.0,204.9 541.3,204.1 543.0,203.1 545.1,201.8 547.4,200.4 549.7,198.9 552.0,197.4 554.2,196.0 556.3,194.5 558.6,192.9 560.9,191.3 563.4,189.6 566.0,187.8 569.1,185.9 572.7,183.7 576.4,181.4 579.9,179.3 582.9,177.5 585.0,176.2 M540.0,205.6 541.3,204.9 543.0,204.0 545.1,202.8 547.4,201.6 549.7,200.3 552.0,199.1 554.2,197.9 556.3,196.7 558.6,195.5 560.9,194.3 563.4,193.1 566.0,191.8 569.1,190.4 572.7,188.9 576.4,187.4 579.9,186.0 582.9,184.7 585.0,183.9 M540.0,206.1 541.3,205.5 543.0,204.6 545.1,203.7 547.4,202.6 549.7,201.6 552.0,200.7 554.2,199.9 556.3,199.1 558.6,198.3 560.9,197.5 563.4,196.8 566.0,196.1 569.1,195.4 572.7,194.6 576.4,193.9 579.9,193.2 582.9,192.6 585.0,192.2 M540.0,206.2 541.3,205.7 543.0,204.9 545.1,204.1 547.4,203.2 549.7,202.4 552.0,201.7 554.2,201.2 556.3,200.7 558.6,200.3 560.9,200.0 563.4,199.7 566.0,199.5 569.1,199.3 572.7,199.3 576.4,199.3 579.9,199.4 582.9,199.5 585.0,199.5 M540.0,207.4 541.3,206.9 543.0,206.3 545.1,205.5 547.4,204.7 549.7,204.1 552.0,203.6 554.2,203.3 556.3,203.2 558.6,203.1 560.9,203.1 563.4,203.2 566.0,203.5 569.1,203.9 572.7,204.5 576.4,205.2 579.9,206.0 582.9,206.6 585.0,207.1 M540.0,207.9 541.3,207.5 543.0,207.0 545.1,206.4 547.4,205.9 549.7,205.5 552.0,205.3 554.2,205.4 556.3,205.6 558.6,205.9 560.9,206.4 563.4,207.0 566.0,207.8 569.1,208.8 572.7,210.1 576.4,211.6 579.9,213.1 582.9,214.3 585.0,215.2 M540.0,207.1 541.3,206.8 543.0,206.4 545.1,205.9 547.4,205.5 549.7,205.3 552.0,205.3 554.2,205.7 556.3,206.3 558.6,207.0 560.9,208.0 563.4,209.1 566.0,210.4 569.1,212.1 572.7,214.3 576.4,216.7 579.9,219.1 582.9,221.1 585.0,222.6 M540.0,208.2 541.3,208.0 543.0,207.7 545.1,207.3 547.4,207.1 549.7,207.1 552.0,207.4 554.2,208.1 556.3,208.9 558.6,210.0 560.9,211.3 563.4,212.9 566.0,214.6 569.1,216.9 572.7,219.7 576.4,222.7 579.9,225.7 582.9,228.2 585.0,230.0" fill="none" stroke="#86e3da" stroke-opacity="0.34" stroke-width="0.80"/><path d="M-10.0,204.6 -2.0,204.5 9.3,203.9 22.5,202.8 36.3,201.6 49.3,200.7 60.0,200.6 68.5,200.8 75.9,201.1 82.5,201.8 88.5,202.7 94.3,204.2 100.0,206.5 105.5,209.5 110.4,213.1 115.0,217.2 119.6,221.4 124.5,225.7 130.0,229.9 136.1,234.0 142.6,238.3 149.4,242.4 156.3,246.2 163.2,249.5 170.0,252.0 176.6,253.8 183.1,255.2 189.7,255.9 196.3,256.1 203.0,255.5 210.0,254.0 217.2,251.6 224.6,248.3 232.2,244.4 239.8,240.3 247.4,236.3 255.0,232.7 262.4,229.4 269.8,226.1 277.2,223.0 284.6,220.3 292.2,218.2 300.0,216.8 308.0,216.4 316.3,216.8 324.7,217.6 333.1,218.3 341.6,218.5 350.0,217.9 358.4,216.2 367.0,213.5 375.6,210.1 384.1,206.3 392.2,202.4 400.0,199.0 407.2,196.1 414.1,193.5 420.6,191.3 427.0,189.2 433.4,187.1 440.0,185.0 446.7,182.7 453.3,180.4 460.0,178.2 466.7,176.5 473.3,175.4 480.0,175.3 486.8,176.0 493.7,177.5 500.7,179.6 507.5,182.1 514.0,185.1 520.0,188.2 525.4,192.0 530.2,196.5 534.8,201.3 539.2,205.8 543.9,209.6 549.0,212.1 555.0,213.1 561.8,212.9 568.8,211.7 575.4,210.1 581.0,208.4 585.0,207.3 M-10.0,205.7 -2.0,205.9 9.3,205.7 22.5,205.2 36.3,204.6 49.3,204.2 60.0,204.3 68.5,204.5 75.9,204.8 82.5,205.2 88.5,206.0 94.3,207.3 100.0,209.4 105.5,212.3 110.4,215.8 115.0,219.8 119.6,223.9 124.5,228.1 130.0,232.1 136.1,236.0 142.6,240.0 149.4,244.0 156.3,247.6 163.2,250.7 170.0,253.1 176.6,255.0 183.1,256.4 189.7,257.3 196.3,257.6 203.0,257.3 210.0,256.2 217.2,254.3 224.6,251.5 232.2,248.2 239.8,244.7 247.4,241.3 255.0,238.1 262.4,235.2 269.8,232.3 277.2,229.6 284.6,227.1 292.2,225.1 300.0,223.7 308.0,223.0 316.3,223.0 324.7,223.3 333.1,223.5 341.6,223.2 350.0,222.2 358.4,220.1 367.0,217.2 375.6,213.7 384.1,209.8 392.2,206.1 400.0,202.8 407.2,200.1 414.1,197.9 420.6,195.9 427.0,194.1 433.4,192.4 440.0,190.6 446.7,188.5 453.3,186.3 460.0,184.3 466.7,182.7 473.3,181.7 480.0,181.5 486.8,182.3 493.7,183.7 500.7,185.7 507.5,188.1 514.0,190.8 520.0,193.5 525.4,196.7 530.2,200.3 534.8,204.1 539.2,207.8 543.9,210.9 549.0,213.1 555.0,214.2 561.8,214.4 568.8,214.0 575.4,213.2 581.0,212.3 585.0,211.7 M-10.0,204.9 -2.0,206.1 9.3,207.5 22.5,208.9 36.3,209.9 49.3,210.4 60.0,210.6 68.5,210.6 75.9,210.4 82.5,210.3 88.5,210.4 94.3,211.0 100.0,212.3 105.5,214.6 110.4,217.6 115.0,221.1 119.6,224.9 124.5,228.6 130.0,232.1 136.1,235.6 142.6,239.3 149.4,243.0 156.3,246.5 163.2,249.8 170.0,252.6 176.6,254.9 183.1,256.9 189.7,258.5 196.3,259.6 203.0,260.0 210.0,259.9 217.2,258.8 224.6,256.9 232.2,254.4 239.8,251.5 247.4,248.4 255.0,245.5 262.4,242.6 269.8,239.6 277.2,236.6 284.6,233.8 292.2,231.3 300.0,229.3 308.0,227.9 316.3,227.2 324.7,226.8 333.1,226.4 341.6,225.8 350.0,224.7 358.4,222.8 367.0,220.3 375.6,217.3 384.1,214.1 392.2,211.0 400.0,208.3 407.2,206.1 414.1,204.3 420.6,202.7 427.0,201.2 433.4,199.6 440.0,197.8 446.7,195.7 453.3,193.3 460.0,191.0 466.7,189.0 473.3,187.6 480.0,187.0 486.8,187.4 493.7,188.5 500.7,190.1 507.5,192.2 514.0,194.5 520.0,196.9 525.4,199.4 530.2,202.3 534.8,205.4 539.2,208.3 543.9,211.0 549.0,213.1 555.0,214.7 561.8,215.8 568.8,216.5 575.4,217.0 581.0,217.2 585.0,217.4 M-10.0,206.5 -2.0,207.2 9.3,208.3 22.5,209.5 36.3,210.7 49.3,211.7 60.0,212.6 68.5,213.0 75.9,213.2 82.5,213.4 88.5,213.7 94.3,214.5 100.0,216.1 105.5,218.5 110.4,221.6 115.0,225.2 119.6,229.0 124.5,232.8 130.0,236.2 136.1,239.4 142.6,242.7 149.4,245.9 156.3,249.0 163.2,251.8 170.0,254.1 176.6,256.1 183.1,257.8 189.7,259.2 196.3,260.2 203.0,260.8 210.0,260.8 217.2,260.2 224.6,258.8 232.2,257.0 239.8,254.9 247.4,252.7 255.0,250.6 262.4,248.4 269.8,246.1 277.2,243.7 284.6,241.3 292.2,239.1 300.0,237.1 308.0,235.4 316.3,234.2 324.7,233.0 333.1,231.9 341.6,230.5 350.0,228.7 358.4,226.3 367.0,223.3 375.6,220.1 384.1,216.9 392.2,213.9 400.0,211.6 407.2,209.8 414.1,208.5 420.6,207.5 427.0,206.5 433.4,205.4 440.0,204.1 446.7,202.4 453.3,200.3 460.0,198.2 466.7,196.2 473.3,194.7 480.0,193.9 486.8,194.1 493.7,194.9 500.7,196.2 507.5,197.8 514.0,199.5 520.0,201.1 525.4,202.8 530.2,204.7 534.8,206.7 539.2,208.7 543.9,210.7 549.0,212.5 555.0,214.2 561.8,216.0 568.8,217.8 575.4,219.4 581.0,220.8 585.0,221.8 M-10.0,208.5 -2.0,209.0 9.3,209.8 22.5,210.8 36.3,211.9 49.3,213.1 60.0,214.1 68.5,214.7 75.9,215.1 82.5,215.4 88.5,215.9 94.3,216.8 100.0,218.6 105.5,221.2 110.4,224.6 115.0,228.4 119.6,232.5 124.5,236.4 130.0,240.0 136.1,243.3 142.6,246.6 149.4,249.8 156.3,252.8 163.2,255.5 170.0,257.6 176.6,259.4 183.1,260.9 189.7,262.1 196.3,262.9 203.0,263.2 210.0,263.1 217.2,262.4 224.6,261.0 232.2,259.3 239.8,257.3 247.4,255.3 255.0,253.4 262.4,251.6 269.8,249.8 277.2,247.8 284.6,246.0 292.2,244.2 300.0,242.6 308.0,241.3 316.3,240.2 324.7,239.3 333.1,238.2 341.6,236.9 350.0,235.1 358.4,232.6 367.0,229.6 375.6,226.3 384.1,222.9 392.2,219.8 400.0,217.2 407.2,215.2 414.1,213.7 420.6,212.5 427.0,211.3 433.4,210.1 440.0,208.6 446.7,206.7 453.3,204.5 460.0,202.1 466.7,200.1 473.3,198.5 480.0,197.7 486.8,197.9 493.7,198.9 500.7,200.4 507.5,202.2 514.0,204.0 520.0,205.6 525.4,207.0 530.2,208.3 534.8,209.7 539.2,211.1 543.9,212.7 549.0,214.5 555.0,216.7 561.8,219.3 568.8,222.0 575.4,224.6 581.0,226.8 585.0,228.4 M-10.0,209.9 -2.0,210.1 9.3,210.6 22.5,211.9 36.3,213.9 49.3,216.0 60.0,217.7 68.5,218.7 75.9,219.1 82.5,219.3 88.5,219.6 94.3,220.2 100.0,221.6 105.5,223.8 110.4,226.9 115.0,230.4 119.6,234.1 124.5,237.7 130.0,240.9 136.1,243.8 142.6,246.8 149.4,249.8 156.3,252.7 163.2,255.5 170.0,258.1 176.6,260.4 183.1,262.5 189.7,264.4 196.3,266.0 203.0,267.1 210.0,267.7 217.2,267.7 224.6,266.9 232.2,265.5 239.8,263.7 247.4,261.6 255.0,259.4 262.4,257.2 269.8,254.9 277.2,252.6 284.6,250.4 292.2,248.3 300.0,246.4 308.0,245.0 316.3,244.1 324.7,243.4 333.1,242.7 341.6,241.9 350.0,240.6 358.4,238.6 367.0,236.0 375.6,232.8 384.1,229.4 392.2,225.9 400.0,222.9 407.2,220.4 414.1,218.4 420.6,216.6 427.0,215.1 433.4,213.5 440.0,211.8 446.7,209.7 453.3,207.5 460.0,205.3 466.7,203.5 473.3,202.4 480.0,202.2 486.8,203.1 493.7,204.8 500.7,207.0 507.5,209.3 514.0,211.4 520.0,213.0 525.4,213.9 530.2,214.5 534.8,215.0 539.2,215.6 543.9,216.4 549.0,217.6 555.0,219.6 561.8,222.2 568.8,225.1 575.4,228.1 581.0,230.7 585.0,232.6 M-10.0,211.3 -2.0,211.2 9.3,211.5 22.5,212.6 36.3,214.5 49.3,216.9 60.0,219.0 68.5,220.5 75.9,221.4 82.5,222.0 88.5,222.7 94.3,223.8 100.0,225.6 105.5,228.2 110.4,231.6 115.0,235.5 119.6,239.5 124.5,243.2 130.0,246.4 136.1,249.1 142.6,251.6 149.4,254.0 156.3,256.2 163.2,258.1 170.0,259.8 176.6,261.2 183.1,262.5 189.7,263.7 196.3,264.8 203.0,265.7 210.0,266.4 217.2,266.8 224.6,266.8 232.2,266.6 239.8,266.1 247.4,265.6 255.0,265.1 262.4,264.4 269.8,263.5 277.2,262.3 284.6,260.7 292.2,259.0 300.0,256.9 308.0,254.7 316.3,252.4 324.7,250.0 333.1,247.4 341.6,244.8 350.0,241.9 358.4,238.8 367.0,235.6 375.6,232.3 384.1,229.5 392.2,227.1 400.0,225.4 407.2,224.4 414.1,223.9 420.6,223.6 427.0,223.3 433.4,222.8 440.0,221.9 446.7,220.3 453.3,218.1 460.0,215.7 466.7,213.2 473.3,211.2 480.0,209.8 486.8,209.3 493.7,209.6 500.7,210.5 507.5,211.5 514.0,212.5 520.0,213.1 525.4,213.2 530.2,212.9 534.8,212.6 539.2,212.6 543.9,213.2 549.0,214.8 555.0,217.8 561.8,222.2 568.8,227.4 575.4,232.6 581.0,237.1 585.0,240.3 M-10.0,218.4 -2.0,217.5 9.3,216.1 22.5,214.8 36.3,214.4 49.3,215.4 60.0,217.1 68.5,218.8 75.9,220.1 82.5,221.4 88.5,222.7 94.3,224.6 100.0,227.2 105.5,230.6 110.4,234.8 115.0,239.3 119.6,243.9 124.5,248.2 130.0,251.8 136.1,254.7 142.6,257.3 149.4,259.5 156.3,261.2 163.2,262.6 170.0,263.6 176.6,264.3 183.1,265.0 189.7,265.6 196.3,266.1 203.0,266.7 210.0,267.2 217.2,267.7 224.6,268.1 232.2,268.4 239.8,268.7 247.4,269.0 255.0,269.4 262.4,269.5 269.8,269.3 277.2,268.7 284.6,267.6 292.2,266.0 300.0,263.9 308.0,261.3 316.3,258.4 324.7,255.3 333.1,252.0 341.6,248.8 350.0,245.6 358.4,242.4 367.0,239.3 375.6,236.5 384.1,234.3 392.2,232.6 400.0,231.5 407.2,231.1 414.1,230.9 420.6,230.9 427.0,230.7 433.4,230.1 440.0,229.0 446.7,226.9 453.3,224.1 460.0,220.9 466.7,217.6 473.3,214.6 480.0,212.5 486.8,211.4 493.7,211.3 500.7,212.0 507.5,213.0 514.0,214.2 520.0,215.0 525.4,215.2 530.2,214.8 534.8,214.4 539.2,214.3 543.9,215.2 549.0,217.5 555.0,221.8 561.8,227.9 568.8,234.8 575.4,241.4 581.0,247.1 585.0,250.9" fill="none" stroke="#86e3da" stroke-opacity="0.34" stroke-width="0.70"/><path d="M-10.0,198.1 -2.0,199.3 9.3,201.3 22.5,203.7 36.3,206.3 49.3,208.8 60.0,210.7 68.5,211.9 75.9,212.8 82.5,213.5 88.5,214.2 94.3,215.3 100.0,216.9 105.5,219.2 110.6,222.0 115.3,225.3 120.0,228.7 124.8,232.0 130.0,234.9 135.5,237.5 141.3,240.0 147.2,242.4 153.1,244.7 159.1,246.8 165.0,248.8 170.8,250.5 176.5,251.9 182.2,253.3 188.0,254.7 193.9,256.0 200.0,257.5 206.4,259.3 213.1,261.4 220.0,263.6 226.9,265.7 233.6,267.5 240.0,268.6 246.1,269.2 252.0,269.3 257.8,269.0 263.5,268.3 269.2,267.3 275.0,266.0 280.7,264.1 286.1,261.5 291.6,258.5 297.2,255.5 303.3,252.9 310.0,251.1 317.5,250.1 325.6,249.8 334.1,249.7 342.8,249.4 351.5,248.5 360.0,246.8 368.3,243.9 376.7,240.1 385.0,235.9 393.3,231.6 401.7,227.5 410.0,224.2 418.4,221.7 427.0,219.8 435.6,218.3 444.1,217.2 452.2,216.3 460.0,215.4 467.1,214.4 473.7,213.7 480.1,213.0 486.4,212.5 492.9,212.1 500.0,211.9 507.8,211.6 516.1,211.1 524.8,210.8 533.3,210.9 541.5,211.6 549.0,213.1 556.2,215.9 563.3,219.8 570.1,224.1 576.1,228.4 581.2,232.0 585.0,234.5 M-10.0,204.9 -2.0,206.6 9.3,208.6 22.5,210.1 36.3,210.5 49.3,210.0 60.0,209.3 68.5,208.6 75.9,208.0 82.5,207.7 88.5,207.9 94.3,208.7 100.0,210.5 105.5,213.2 110.6,216.9 115.3,221.1 120.0,225.5 124.8,230.0 130.0,234.3 135.5,238.3 141.3,242.4 147.2,246.3 153.1,250.0 159.1,253.4 165.0,256.3 170.8,258.8 176.5,260.8 182.2,262.4 188.0,263.8 193.9,265.0 200.0,266.0 206.4,267.2 213.1,268.5 220.0,269.8 226.9,271.1 233.6,272.1 240.0,272.6 246.1,272.8 252.0,272.6 257.8,272.2 263.5,271.5 269.2,270.7 275.0,269.7 280.7,268.2 286.1,265.9 291.6,263.4 297.2,260.7 303.3,258.3 310.0,256.5 317.5,255.2 325.6,254.3 334.1,253.3 342.8,251.9 351.5,249.9 360.0,247.1 368.3,243.5 376.7,239.4 385.0,235.3 393.3,231.6 401.7,228.7 410.0,227.0 418.4,226.6 427.0,226.9 435.6,227.7 444.1,228.6 452.2,229.2 460.0,229.1 467.1,228.6 473.7,227.7 480.1,226.6 486.4,225.3 492.9,223.7 500.0,221.7 507.8,219.2 516.1,216.2 524.8,213.3 533.3,211.2 541.5,210.2 549.0,210.9 556.2,213.6 563.3,218.0 570.1,223.4 576.1,228.8 581.2,233.6 585.0,236.8 M-10.0,204.9 -2.0,205.9 9.3,207.5 22.5,209.4 36.3,211.2 49.3,212.7 60.0,213.7 68.5,214.2 75.9,214.2 82.5,214.2 88.5,214.3 94.3,214.9 100.0,216.2 105.5,218.5 110.6,221.5 115.3,225.1 120.0,228.9 124.8,232.6 130.0,236.0 135.5,239.0 141.3,242.1 147.2,245.2 153.1,248.2 159.1,251.1 165.0,254.0 170.8,256.6 176.5,259.1 182.2,261.4 188.0,263.7 193.9,266.0 200.0,268.3 206.4,270.9 213.1,273.7 220.0,276.4 226.9,278.7 233.6,280.4 240.0,281.4 246.1,281.6 252.0,281.1 257.8,280.1 263.5,278.7 269.2,276.9 275.0,274.8 280.7,272.2 286.1,269.0 291.6,265.5 297.2,262.0 303.3,258.9 310.0,256.4 317.5,254.9 325.6,254.2 334.1,254.0 342.8,253.9 351.5,253.6 360.0,252.8 368.3,251.0 376.7,248.5 385.0,245.6 393.3,242.5 401.7,239.7 410.0,237.6 418.4,236.1 427.0,235.0 435.6,234.1 444.1,233.3 452.2,232.4 460.0,231.2 467.1,229.9 473.7,228.8 480.1,227.7 486.4,226.5 492.9,225.4 500.0,224.1 507.8,222.4 516.1,220.3 524.8,218.1 533.3,216.5 541.5,215.9 549.0,216.8 556.2,219.8 563.3,224.5 570.1,230.0 576.1,235.6 581.2,240.4 585.0,243.5 M-10.0,209.4 -2.0,209.7 9.3,210.2 22.5,210.7 36.3,211.4 49.3,212.3 60.0,213.3 68.5,214.0 75.9,214.4 82.5,214.8 88.5,215.4 94.3,216.5 100.0,218.4 105.5,221.3 110.6,225.0 115.3,229.1 120.0,233.4 124.8,237.6 130.0,241.2 135.5,244.5 141.3,247.6 147.2,250.6 153.1,253.4 159.1,256.0 165.0,258.4 170.8,260.6 176.5,262.6 182.2,264.4 188.0,266.1 193.9,267.9 200.0,269.9 206.4,272.1 213.1,274.6 220.0,277.1 226.9,279.4 233.6,281.3 240.0,282.6 246.1,283.1 252.0,283.0 257.8,282.5 263.5,281.6 269.2,280.4 275.0,278.9 280.7,276.9 286.1,274.2 291.6,271.3 297.2,268.3 303.3,265.6 310.0,263.5 317.5,262.1 325.6,261.3 334.1,260.9 342.8,260.5 351.5,259.8 360.0,258.5 368.3,256.3 376.7,253.4 385.0,250.1 393.3,246.8 401.7,243.9 410.0,241.7 418.4,240.4 427.0,239.5 435.6,239.0 444.1,238.6 452.2,238.0 460.0,237.2 467.1,236.2 473.7,235.3 480.1,234.3 486.4,233.3 492.9,232.1 500.0,230.7 507.8,228.6 516.1,225.7 524.8,222.7 533.3,220.1 541.5,218.8 549.0,219.2 556.2,222.0 563.3,226.9 570.1,232.9 576.1,239.0 581.2,244.3 585.0,247.8 M-10.0,211.7 -2.0,212.3 9.3,213.2 22.5,214.1 36.3,215.0 49.3,215.7 60.0,216.3 68.5,216.7 75.9,216.7 82.5,216.7 88.5,217.0 94.3,217.8 100.0,219.5 105.5,222.2 110.6,225.9 115.3,230.2 120.0,234.6 124.8,238.9 130.0,242.7 135.5,246.1 141.3,249.4 147.2,252.5 153.1,255.6 159.1,258.4 165.0,261.1 170.8,263.5 176.5,265.7 182.2,267.8 188.0,269.7 193.9,271.7 200.0,273.8 206.4,276.1 213.1,278.6 220.0,281.1 226.9,283.4 233.6,285.2 240.0,286.3 246.1,286.7 252.0,286.5 257.8,285.9 263.5,284.9 269.2,283.7 275.0,282.2 280.7,280.4 286.1,278.0 291.6,275.3 297.2,272.6 303.3,270.2 310.0,268.3 317.5,267.1 325.6,266.6 334.1,266.4 342.8,266.1 351.5,265.5 360.0,264.2 368.3,261.9 376.7,258.9 385.0,255.5 393.3,252.1 401.7,249.1 410.0,246.9 418.4,245.6 427.0,245.0 435.6,244.6 444.1,244.5 452.2,244.2 460.0,243.6 467.1,242.8 473.7,242.0 480.1,241.1 486.4,240.0 492.9,238.6 500.0,236.9 507.8,234.2 516.1,230.4 524.8,226.4 533.3,222.9 541.5,220.7 549.0,220.6 556.2,223.4 563.3,228.7 570.1,235.3 576.1,242.2 581.2,248.2 585.0,252.2 M-10.0,215.1 -2.0,216.0 9.3,216.9 22.5,217.6 36.3,217.8 49.3,217.7 60.0,217.7 68.5,217.5 75.9,217.2 82.5,217.0 88.5,217.2 94.3,218.1 100.0,219.9 105.5,223.0 110.6,227.1 115.3,231.9 120.0,236.8 124.8,241.6 130.0,246.0 135.5,249.8 141.3,253.6 147.2,257.1 153.1,260.4 159.1,263.4 165.0,266.3 170.8,268.7 176.5,270.9 182.2,272.7 188.0,274.4 193.9,276.0 200.0,277.6 206.4,279.4 213.1,281.3 220.0,283.3 226.9,285.0 233.6,286.3 240.0,287.1 246.1,287.3 252.0,287.1 257.8,286.5 263.5,285.7 269.2,284.8 275.0,283.8 280.7,282.5 286.1,280.8 291.6,278.9 297.2,277.0 303.3,275.5 310.0,274.4 317.5,274.1 325.6,274.3 334.1,274.5 342.8,274.5 351.5,273.9 360.0,272.3 368.3,269.5 376.7,265.8 385.0,261.6 393.3,257.4 401.7,253.7 410.0,250.8 418.4,249.1 427.0,248.2 435.6,247.9 444.1,247.9 452.2,248.0 460.0,247.9 467.1,247.6 473.7,247.3 480.1,246.9 486.4,246.3 492.9,245.3 500.0,243.7 507.8,240.8 516.1,236.6 524.8,231.8 533.3,227.4 541.5,224.3 549.0,223.7 556.2,226.3 563.3,231.6 570.1,238.5 576.1,245.8 581.2,252.2 585.0,256.5 M-10.0,219.3 -2.0,219.6 9.3,219.9 22.5,219.9 36.3,219.6 49.3,219.3 60.0,219.1 68.5,218.9 75.9,218.4 82.5,218.0 88.5,218.0 94.3,218.7 100.0,220.4 105.5,223.5 110.6,227.6 115.3,232.3 120.0,237.3 124.8,242.2 130.0,246.6 135.5,250.5 141.3,254.2 147.2,257.8 153.1,261.2 159.1,264.5 165.0,267.7 170.8,270.5 176.5,273.1 182.2,275.5 188.0,277.8 193.9,280.0 200.0,282.3 206.4,284.8 213.1,287.4 220.0,290.0 226.9,292.2 233.6,293.9 240.0,294.8 246.1,295.0 252.0,294.6 257.8,293.7 263.5,292.5 269.2,291.0 275.0,289.4 280.7,287.5 286.1,285.2 291.6,282.6 297.2,280.1 303.3,277.8 310.0,276.0 317.5,274.9 325.6,274.5 334.1,274.5 342.8,274.5 351.5,274.3 360.0,273.5 368.3,271.8 376.7,269.4 385.0,266.6 393.3,263.9 401.7,261.5 410.0,259.9 418.4,259.1 427.0,258.9 435.6,258.9 444.1,258.9 452.2,258.6 460.0,257.7 467.1,256.6 473.7,255.5 480.1,254.2 486.4,252.5 492.9,250.4 500.0,247.7 507.8,243.6 516.1,237.9 524.8,232.0 533.3,226.7 541.5,223.2 549.0,222.6 556.2,225.7 563.3,232.0 570.1,240.1 576.1,248.6 581.2,256.1 585.0,261.1 M-10.0,214.7 -2.0,214.1 9.3,214.4 22.5,216.6 36.3,220.4 49.3,224.4 60.0,227.1 68.5,228.3 75.9,228.2 82.5,227.6 88.5,226.9 94.3,226.6 100.0,227.1 105.5,228.9 110.6,231.8 115.3,235.6 120.0,239.7 124.8,243.7 130.0,247.3 135.5,250.5 141.3,253.9 147.2,257.5 153.1,261.2 159.1,265.1 165.0,269.0 170.8,272.7 176.5,276.1 182.2,279.3 188.0,282.1 193.9,284.7 200.0,287.0 206.4,289.1 213.1,291.0 220.0,292.5 226.9,293.4 233.6,293.8 240.0,293.5 246.1,292.8 252.0,291.8 257.8,290.8 263.5,289.8 269.2,289.0 275.0,288.4 280.7,288.0 286.1,287.4 291.6,286.8 297.2,286.4 303.3,286.3 310.0,286.6 317.5,287.4 325.6,288.2 334.1,288.5 342.8,287.8 351.5,285.9 360.0,282.8 368.3,278.5 376.7,273.6 385.0,268.8 393.3,264.6 401.7,261.6 410.0,260.2 418.4,260.4 427.0,261.6 435.6,263.2 444.1,264.7 452.2,265.4 460.0,265.0 467.1,263.8 473.7,262.2 480.1,260.1 486.4,257.5 492.9,254.2 500.0,250.2 507.8,244.8 516.1,238.2 524.8,231.9 533.3,227.1 541.5,224.9 549.0,226.1 556.2,231.4 563.3,240.2 570.1,250.4 576.1,260.7 581.2,269.3 585.0,274.9" fill="none" stroke="#86e3da" stroke-opacity="0.34" stroke-width="0.70"/><path d="M200.0,302.1 205.6,300.8 213.3,299.0 222.5,297.4 232.2,296.1 241.7,295.2 250.0,294.8 257.1,294.6 263.7,294.6 270.0,294.6 276.3,294.4 282.9,293.9 290.0,292.8 297.6,291.1 305.6,288.6 313.8,285.5 322.2,282.2 331.0,278.8 340.0,275.6 349.5,272.8 359.6,270.5 370.0,268.8 380.4,267.7 390.5,267.0 400.0,266.5 408.9,266.0 417.4,265.4 425.6,264.6 433.7,263.7 441.8,262.5 450.0,261.0 458.4,259.1 466.9,256.8 475.3,254.1 483.7,251.4 492.0,248.9 500.0,246.7 507.8,245.0 515.6,243.9 523.1,243.2 530.6,243.0 537.8,243.2 545.0,243.8 552.4,244.8 560.2,246.4 567.8,248.2 574.8,249.9 580.7,251.3 585.0,252.2 M200.0,304.1 205.6,303.7 213.3,303.1 222.5,302.6 232.2,302.0 241.7,301.1 250.0,300.1 257.1,299.1 263.7,298.0 270.0,296.8 276.3,295.5 282.9,293.8 290.0,291.8 297.6,289.3 305.6,286.5 313.8,283.8 322.2,281.3 331.0,279.3 340.0,278.0 349.5,277.3 359.6,277.0 370.0,276.8 380.4,276.4 390.5,275.5 400.0,274.0 408.9,271.9 417.4,269.6 425.6,267.1 433.7,264.6 441.8,262.2 450.0,260.1 458.4,258.1 466.9,256.4 475.3,254.9 483.7,253.8 492.0,253.0 500.0,252.6 507.8,252.3 515.6,252.1 523.1,251.9 530.6,251.7 537.8,251.3 545.0,251.0 552.4,250.8 560.2,250.7 567.8,250.8 574.8,251.1 580.7,251.4 585.0,251.6 M200.0,307.6 205.6,306.6 213.3,305.2 222.5,303.5 232.2,301.8 241.7,300.1 250.0,298.8 257.1,297.7 263.7,296.8 270.0,296.0 276.3,295.2 282.9,294.2 290.0,293.1 297.6,291.7 305.6,290.1 313.8,288.3 322.2,286.6 331.0,285.0 340.0,283.6 349.5,282.5 359.6,281.6 370.0,280.6 380.4,279.6 390.5,278.4 400.0,276.9 408.9,275.2 417.4,273.3 425.6,271.3 433.7,269.3 441.8,267.3 450.0,265.3 458.4,263.3 466.9,261.3 475.3,259.3 483.7,257.5 492.0,256.0 500.0,254.8 507.8,254.0 515.6,253.3 523.1,252.9 530.6,252.7 537.8,252.7 545.0,253.0 552.4,253.5 560.2,254.4 567.8,255.5 574.8,256.6 580.7,257.5 585.0,258.1 M200.0,308.8 205.6,308.1 213.3,307.0 222.5,305.8 232.2,304.5 241.7,303.2 250.0,302.1 257.1,301.1 263.7,300.3 270.0,299.4 276.3,298.5 282.9,297.5 290.0,296.4 297.6,295.0 305.6,293.3 313.8,291.6 322.2,289.8 331.0,288.2 340.0,286.7 349.5,285.4 359.6,284.3 370.0,283.3 380.4,282.3 390.5,281.2 400.0,279.9 408.9,278.4 417.4,276.7 425.6,274.9 433.7,273.1 441.8,271.3 450.0,269.6 458.4,267.8 466.9,266.0 475.3,264.2 483.7,262.5 492.0,260.9 500.0,259.7 507.8,258.7 515.6,257.8 523.1,257.1 530.6,256.6 537.8,256.4 545.0,256.3 552.4,256.7 560.2,257.4 567.8,258.3 574.8,259.2 580.7,260.1 585.0,260.6 M200.0,310.9 205.6,310.1 213.3,308.9 222.5,307.6 232.2,306.1 241.7,304.8 250.0,303.6 257.1,302.6 263.7,301.6 270.0,300.7 276.3,299.8 282.9,298.9 290.0,297.8 297.6,296.6 305.6,295.3 313.8,294.0 322.2,292.6 331.0,291.3 340.0,290.1 349.5,289.1 359.6,288.2 370.0,287.3 380.4,286.4 390.5,285.3 400.0,284.0 408.9,282.5 417.4,280.8 425.6,279.0 433.7,277.1 441.8,275.3 450.0,273.6 458.4,271.8 466.9,270.1 475.3,268.3 483.7,266.7 492.0,265.2 500.0,264.0 507.8,262.9 515.6,262.0 523.1,261.2 530.6,260.6 537.8,260.3 545.0,260.1 552.4,260.4 560.2,261.0 567.8,261.8 574.8,262.7 580.7,263.5 585.0,263.9 M200.0,313.6 205.6,313.0 213.3,312.1 222.5,310.9 232.2,309.6 241.7,308.1 250.0,306.8 257.1,305.5 263.7,304.3 270.0,303.0 276.3,301.8 282.9,300.6 290.0,299.3 297.6,297.9 305.6,296.6 313.8,295.3 322.2,294.0 331.0,293.0 340.0,292.1 349.5,291.4 359.6,291.0 370.0,290.7 380.4,290.3 390.5,289.8 400.0,289.0 408.9,287.8 417.4,286.3 425.6,284.6 433.7,282.7 441.8,280.8 450.0,278.9 458.4,276.9 466.9,274.8 475.3,272.7 483.7,270.6 492.0,268.7 500.0,267.1 507.8,265.7 515.6,264.4 523.1,263.4 530.6,262.6 537.8,262.2 545.0,262.1 552.4,262.5 560.2,263.3 567.8,264.5 574.8,265.7 580.7,266.8 585.0,267.5 M200.0,312.3 205.6,311.5 213.3,310.6 222.5,309.8 232.2,309.3 241.7,308.9 250.0,308.6 257.1,308.1 263.7,307.6 270.0,306.9 276.3,306.1 282.9,305.1 290.0,304.0 297.6,302.6 305.6,301.1 313.8,299.5 322.2,297.8 331.0,296.2 340.0,294.8 349.5,293.7 359.6,293.1 370.0,293.0 380.4,293.1 390.5,293.2 400.0,293.0 408.9,292.3 417.4,291.1 425.6,289.5 433.7,287.5 441.8,285.4 450.0,283.1 458.4,280.6 466.9,278.0 475.3,275.5 483.7,273.3 492.0,271.3 500.0,269.9 507.8,268.8 515.6,267.9 523.1,267.4 530.6,267.1 537.8,267.2 545.0,267.5 552.4,268.2 560.2,269.3 567.8,270.4 574.8,271.3 580.7,272.0 585.0,272.3 M200.0,313.0 205.6,312.4 213.3,311.8 222.5,311.7 232.2,311.9 241.7,312.1 250.0,312.1 257.1,311.7 263.7,310.9 270.0,309.8 276.3,308.5 282.9,306.9 290.0,305.1 297.6,303.2 305.6,301.4 313.8,299.7 322.2,298.4 331.0,297.7 340.0,297.4 349.5,297.8 359.6,298.7 370.0,299.7 380.4,300.3 390.5,300.0 400.0,298.8 408.9,296.7 417.4,294.1 425.6,291.1 433.7,288.2 441.8,285.4 450.0,283.1 458.4,281.3 466.9,280.0 475.3,279.1 483.7,278.5 492.0,278.1 500.0,277.8 507.8,277.2 515.6,276.3 523.1,275.1 530.6,273.6 537.8,272.1 545.0,270.8 552.4,269.8 560.2,269.3 567.8,269.3 574.8,269.8 580.7,270.5 585.0,271.0" fill="none" stroke="#86e3da" stroke-opacity="0.32" stroke-width="0.70"/></g>
<mask id="fadeL" maskUnits="userSpaceOnUse" x="0" y="0" width="578" height="297"><rect width="578" height="297" fill="url(#fl)"/></mask>
<linearGradient id="fl" x1="250" y1="0" x2="578" y2="0" gradientUnits="userSpaceOnUse"><stop offset="0" stop-color="#000"/><stop offset="0.27" stop-color="#fff"/><stop offset="0.62" stop-color="#fff"/><stop offset="0.85" stop-color="#ddd"/><stop offset="1" stop-color="#ddd"/></linearGradient>
<g mask="url(#fadeL)"><path d="M240.0,182.7 243.0,184.5 247.1,187.0 252.0,190.0 257.3,193.3 262.8,196.6 268.0,199.7 273.0,203.1 278.1,206.8 283.2,210.4 288.6,213.6 294.2,215.9 300.0,216.9 306.2,216.3 312.7,214.3 319.5,211.5 326.4,208.1 333.2,204.6 340.0,201.4 346.9,198.3 354.0,195.1 361.1,192.0 367.9,189.2 374.3,186.8 380.0,185.0 384.7,184.0 388.4,183.5 391.7,183.3 394.9,183.1 398.6,182.5 403.0,181.5 408.5,179.7 414.8,177.3 421.5,174.7 428.2,172.0 434.5,169.4 440.0,167.3 444.4,165.6 448.0,164.0 451.2,162.6 454.5,161.5 458.3,160.6 463.0,160.0 468.9,159.2 475.6,158.4 482.9,157.6 490.3,157.2 497.4,157.4 504.0,158.5 510.1,161.4 516.0,165.9 521.6,171.2 527.0,176.4 532.2,180.6 537.0,183.0 541.4,183.3 545.3,182.0 549.0,179.7 552.6,176.9 556.2,174.0 560.0,171.7 564.3,169.7 569.1,167.5 573.9,165.3 578.4,163.2 582.3,161.5 585.0,160.3 M240.0,187.4 243.0,189.0 247.1,191.1 252.0,193.5 257.3,196.1 262.8,198.5 268.0,200.7 273.0,203.2 278.1,206.1 283.2,209.0 288.6,211.5 294.2,213.3 300.0,214.0 306.2,213.3 312.7,211.7 319.5,209.5 326.4,207.1 333.2,204.9 340.0,203.1 346.9,201.4 354.0,199.6 361.1,197.7 367.9,195.7 374.3,193.9 380.0,192.2 384.7,191.1 388.4,190.4 391.7,189.9 394.9,189.3 398.6,188.2 403.0,186.5 408.5,183.7 414.8,180.2 421.5,176.2 428.2,172.1 434.5,168.4 440.0,165.3 444.4,163.0 448.0,161.0 451.2,159.3 454.5,157.9 458.3,156.9 463.0,156.3 468.9,156.0 475.6,156.0 482.9,156.5 490.3,157.6 497.4,159.3 504.0,161.8 510.1,165.5 516.0,170.6 521.6,176.1 527.0,181.3 532.2,185.2 537.0,187.2 541.4,186.9 545.3,185.0 549.0,181.9 552.6,178.4 556.2,174.7 560.0,171.5 564.3,168.4 569.1,165.0 573.9,161.6 578.4,158.4 582.3,155.8 585.0,154.0 M240.0,188.2 243.0,189.7 247.1,191.7 252.0,194.1 257.3,196.6 262.8,199.2 268.0,201.6 273.0,204.3 278.1,207.4 283.2,210.6 288.6,213.4 294.2,215.5 300.0,216.4 306.2,215.9 312.7,214.5 319.5,212.3 326.4,209.8 333.2,207.3 340.0,205.1 346.9,203.0 354.0,200.7 361.1,198.4 367.9,196.1 374.3,194.1 380.0,192.5 384.7,191.4 388.4,190.8 391.7,190.4 394.9,189.9 398.6,189.2 403.0,187.8 408.5,185.6 414.8,182.8 421.5,179.5 428.2,176.1 434.5,172.9 440.0,170.1 444.4,167.8 448.0,165.7 451.2,163.9 454.5,162.3 458.3,161.0 463.0,159.9 468.9,159.0 475.6,158.3 482.9,157.9 490.3,158.0 497.4,158.8 504.0,160.4 510.1,163.4 516.0,167.8 521.6,172.9 527.0,177.7 532.2,181.5 537.0,183.5 541.4,183.4 545.3,181.7 549.0,178.9 552.6,175.6 556.2,172.3 560.0,169.4 564.3,166.7 569.1,163.8 573.9,160.8 578.4,158.0 582.3,155.6 585.0,153.8 M240.0,188.1 243.0,189.7 247.1,191.9 252.0,194.5 257.3,197.3 262.8,200.1 268.0,202.8 273.0,205.8 278.1,209.2 283.2,212.6 288.6,215.7 294.2,218.0 300.0,219.0 306.2,218.7 312.7,217.4 319.5,215.3 326.4,212.9 333.2,210.3 340.0,208.0 346.9,205.7 354.0,203.1 361.1,200.5 367.9,198.0 374.3,195.8 380.0,194.0 384.7,192.8 388.4,192.1 391.7,191.5 394.9,191.0 398.6,190.2 403.0,188.8 408.5,186.6 414.8,183.9 421.5,180.8 428.2,177.5 434.5,174.4 440.0,171.7 444.4,169.4 448.0,167.3 451.2,165.4 454.5,163.8 458.3,162.5 463.0,161.4 468.9,160.7 475.6,160.1 482.9,159.9 490.3,160.3 497.4,161.2 504.0,162.7 510.1,165.5 516.0,169.6 521.6,174.1 527.0,178.5 532.2,181.8 537.0,183.3 541.4,182.7 545.3,180.6 549.0,177.4 552.6,173.7 556.2,170.0 560.0,166.7 564.3,163.7 569.1,160.3 573.9,156.9 578.4,153.7 582.3,150.9 585.0,148.9 M240.0,189.1 243.0,190.6 247.1,192.7 252.0,195.2 257.3,197.9 262.8,200.7 268.0,203.4 273.0,206.4 278.1,210.0 283.2,213.6 288.6,216.9 294.2,219.4 300.0,220.8 306.2,220.8 312.7,219.9 319.5,218.1 326.4,215.9 333.2,213.6 340.0,211.3 346.9,208.9 354.0,206.1 361.1,203.1 367.9,200.2 374.3,197.6 380.0,195.4 384.7,193.9 388.4,193.0 391.7,192.3 394.9,191.6 398.6,190.6 403.0,189.1 408.5,186.9 414.8,184.3 421.5,181.4 428.2,178.5 434.5,175.7 440.0,173.3 444.4,171.3 448.0,169.3 451.2,167.5 454.5,166.0 458.3,164.8 463.0,164.0 468.9,163.5 475.6,163.3 482.9,163.3 490.3,163.7 497.4,164.5 504.0,165.7 510.1,167.9 516.0,171.2 521.6,175.0 527.0,178.4 532.2,180.9 537.0,181.7 541.4,180.5 545.3,177.8 549.0,174.1 552.6,170.0 556.2,165.8 560.0,162.2 564.3,158.8 569.1,155.2 573.9,151.6 578.4,148.3 582.3,145.5 585.0,143.5 M240.0,190.0 243.0,191.5 247.1,193.5 252.0,195.9 257.3,198.5 262.8,201.3 268.0,204.0 273.0,207.1 278.1,210.7 283.2,214.4 288.6,217.8 294.2,220.5 300.0,222.0 306.2,222.3 312.7,221.6 319.5,220.1 326.4,218.2 333.2,216.1 340.0,214.0 346.9,211.7 354.0,208.9 361.1,205.9 367.9,203.0 374.3,200.2 380.0,198.0 384.7,196.4 388.4,195.3 391.7,194.5 394.9,193.7 398.6,192.6 403.0,191.0 408.5,188.8 414.8,186.1 421.5,183.2 428.2,180.2 434.5,177.4 440.0,175.0 444.4,172.8 448.0,170.8 451.2,168.9 454.5,167.2 458.3,165.9 463.0,165.0 468.9,164.5 475.6,164.3 482.9,164.5 490.3,165.0 497.4,165.8 504.0,167.0 510.1,169.0 516.0,172.1 521.6,175.4 527.0,178.5 532.2,180.6 537.0,181.0 541.4,179.5 545.3,176.6 549.0,172.6 552.6,168.2 556.2,163.8 560.0,160.0 564.3,156.4 569.1,152.5 573.9,148.7 578.4,145.1 582.3,142.2 585.0,140.0 M240.0,191.2 243.0,192.6 247.1,194.6 252.0,196.9 257.3,199.4 262.8,202.1 268.0,204.8 273.0,207.9 278.1,211.5 283.2,215.2 288.6,218.6 294.2,221.4 300.0,223.0 306.2,223.4 312.7,222.9 319.5,221.7 326.4,220.0 333.2,218.1 340.0,216.1 346.9,213.9 354.0,211.2 361.1,208.3 367.9,205.3 374.3,202.6 380.0,200.3 384.7,198.7 388.4,197.6 391.7,196.7 394.9,195.8 398.6,194.7 403.0,193.2 408.5,191.0 414.8,188.4 421.5,185.6 428.2,182.7 434.5,179.9 440.0,177.5 444.4,175.3 448.0,173.1 451.2,171.1 454.5,169.3 458.3,167.8 463.0,166.8 468.9,166.2 475.6,166.0 482.9,166.1 490.3,166.5 497.4,167.2 504.0,168.2 510.1,169.9 516.0,172.4 521.6,175.3 527.0,177.8 532.2,179.4 537.0,179.4 541.4,177.6 545.3,174.3 549.0,170.1 552.6,165.4 556.2,160.8 560.0,156.7 564.3,152.9 569.1,148.9 573.9,144.9 578.4,141.2 582.3,138.1 585.0,135.9 M240.0,191.3 243.0,192.9 247.1,195.0 252.0,197.5 257.3,200.4 262.8,203.4 268.0,206.4 273.0,209.8 278.1,213.8 283.2,217.8 288.6,221.6 294.2,224.6 300.0,226.4 306.2,226.9 312.7,226.5 319.5,225.2 326.4,223.4 333.2,221.2 340.0,218.9 346.9,216.3 354.0,213.1 361.1,209.7 367.9,206.3 374.3,203.2 380.0,200.8 384.7,199.1 388.4,197.9 391.7,196.9 394.9,196.0 398.6,194.9 403.0,193.5 408.5,191.6 414.8,189.3 421.5,186.9 428.2,184.5 434.5,182.1 440.0,179.9 444.4,177.9 448.0,175.7 451.2,173.7 454.5,171.9 458.3,170.4 463.0,169.4 468.9,168.8 475.6,168.5 482.9,168.5 490.3,168.7 497.4,169.2 504.0,169.7 510.1,170.9 516.0,172.9 521.6,175.2 527.0,177.1 532.2,178.2 537.0,177.8 541.4,175.7 545.3,172.2 549.0,167.7 552.6,162.9 556.2,158.1 560.0,153.9 564.3,150.0 569.1,145.9 573.9,141.9 578.4,138.2 582.3,135.0 585.0,132.7 M240.0,193.2 243.0,194.4 247.1,196.0 252.0,198.1 257.3,200.4 262.8,203.0 268.0,205.8 273.0,209.1 278.1,213.0 283.2,217.1 288.6,221.1 294.2,224.5 300.0,226.8 306.2,228.0 312.7,228.3 319.5,227.8 326.4,226.6 333.2,224.9 340.0,222.9 346.9,220.2 354.0,216.8 361.1,213.0 367.9,209.2 374.3,205.6 380.0,202.7 384.7,200.7 388.4,199.2 391.7,198.0 394.9,196.9 398.6,195.7 403.0,194.1 408.5,192.2 414.8,190.1 421.5,188.0 428.2,185.9 434.5,183.9 440.0,182.0 444.4,180.0 448.0,178.0 451.2,176.0 454.5,174.1 458.3,172.6 463.0,171.6 468.9,171.0 475.6,170.7 482.9,170.6 490.3,170.6 497.4,170.7 504.0,170.9 510.1,171.6 516.0,173.1 521.6,174.9 527.0,176.4 532.2,177.1 537.0,176.5 541.4,174.2 545.3,170.5 549.0,166.0 552.6,161.0 556.2,156.1 560.0,151.8 564.3,147.8 569.1,143.6 573.9,139.5 578.4,135.6 582.3,132.2 585.0,129.8 M240.0,193.3 243.0,194.9 247.1,197.1 252.0,199.8 257.3,202.8 262.8,205.9 268.0,209.0 273.0,212.6 278.1,216.7 283.2,221.0 288.6,224.9 294.2,228.2 300.0,230.4 306.2,231.3 312.7,231.4 319.5,230.7 326.4,229.4 333.2,227.7 340.0,225.7 346.9,223.2 354.0,219.9 361.1,216.2 367.9,212.4 374.3,208.9 380.0,206.0 384.7,203.8 388.4,202.1 391.7,200.7 394.9,199.4 398.6,197.9 403.0,196.0 408.5,193.6 414.8,191.0 421.5,188.2 428.2,185.5 434.5,182.9 440.0,180.6 444.4,178.4 448.0,176.1 451.2,174.0 454.5,172.0 458.3,170.5 463.0,169.6 468.9,169.4 475.6,169.8 482.9,170.7 490.3,171.8 497.4,173.0 504.0,174.0 510.1,175.3 516.0,177.0 521.6,178.7 527.0,179.9 532.2,180.3 537.0,179.2 541.4,176.4 545.3,172.2 549.0,167.1 552.6,161.5 556.2,156.1 560.0,151.1 564.3,146.5 569.1,141.5 573.9,136.6 578.4,132.1 582.3,128.3 585.0,125.5 M240.0,199.0 243.0,200.4 247.1,202.3 252.0,204.6 257.3,207.0 262.8,209.6 268.0,212.1 273.0,215.1 278.1,218.6 283.2,222.2 288.6,225.6 294.2,228.2 300.0,229.7 306.2,230.1 312.7,229.7 319.5,228.6 326.4,227.1 333.2,225.2 340.0,223.2 346.9,220.8 354.0,217.7 361.1,214.4 367.9,211.1 374.3,208.1 380.0,205.8 384.7,204.1 388.4,202.8 391.7,201.8 394.9,200.8 398.6,199.8 403.0,198.4 408.5,196.8 414.8,195.0 421.5,193.1 428.2,191.2 434.5,189.2 440.0,187.2 444.4,185.2 448.0,183.0 451.2,180.7 454.5,178.7 458.3,177.1 463.0,176.0 468.9,175.5 475.6,175.6 482.9,175.9 490.3,176.3 497.4,176.5 504.0,176.5 510.1,176.6 516.0,177.1 521.6,177.6 527.0,177.7 532.2,176.9 537.0,174.9 541.4,171.3 545.3,166.4 549.0,160.7 552.6,154.7 556.2,148.7 560.0,143.4 564.3,138.4 569.1,133.2 573.9,128.2 578.4,123.6 582.3,119.8 585.0,117.0" fill="none" stroke="#86e3da" stroke-opacity="0.44" stroke-width="0.80"/><path d="M240.0,242.0 241.3,241.3 242.8,240.3 244.7,239.2 247.2,237.9 250.6,236.6 255.0,235.3 260.7,234.0 267.6,232.6 275.3,231.4 283.5,230.4 291.9,229.5 300.0,228.9 308.0,228.6 316.3,228.3 324.7,227.7 333.1,226.3 341.6,224.1 350.0,220.8 358.5,216.5 367.1,211.7 375.7,206.8 384.1,202.5 392.3,198.9 400.0,196.4 407.1,194.3 413.7,192.2 419.9,190.4 426.1,189.3 432.4,189.1 439.0,190.3 446.1,193.1 453.4,197.4 460.9,202.0 468.3,206.3 475.4,209.5 482.0,211.0 488.2,210.8 494.1,209.6 499.8,207.7 505.2,205.6 510.3,203.5 515.0,201.8 519.3,200.4 523.1,199.0 526.6,197.7 530.0,196.8 533.4,196.2 537.0,196.3 540.8,197.1 544.5,198.6 548.3,200.6 552.1,202.8 556.0,205.1 560.0,207.2 564.3,209.3 569.1,211.4 573.9,213.6 578.4,215.6 582.3,217.4 585.0,218.7 M240.0,245.6 241.3,244.7 242.8,243.5 244.7,242.2 247.2,240.6 250.6,238.8 255.0,237.0 260.7,235.1 267.6,233.2 275.3,231.6 283.5,230.6 291.9,229.9 300.0,229.7 308.0,229.7 316.3,229.9 324.7,229.6 333.1,228.5 341.6,226.3 350.0,223.1 358.5,218.8 367.1,214.1 375.7,209.4 384.1,205.4 392.3,202.2 400.0,200.0 407.1,198.1 413.7,196.2 419.9,194.5 426.1,193.2 432.4,192.8 439.0,193.5 446.1,195.8 453.4,199.2 460.9,203.0 468.3,206.3 475.4,208.7 482.0,209.5 488.2,208.8 494.1,207.3 499.8,205.4 505.2,203.4 510.3,201.7 515.0,200.5 519.3,199.6 523.1,198.7 526.6,197.9 530.0,197.3 533.4,197.2 537.0,197.8 540.8,199.1 544.5,201.1 548.3,203.6 552.1,206.1 556.0,208.6 560.0,210.8 564.3,212.7 569.1,214.4 573.9,215.9 578.4,217.0 582.3,217.8 585.0,218.3 M240.0,251.6 241.3,251.1 242.8,250.5 244.7,249.7 247.2,248.8 250.6,247.8 255.0,246.7 260.7,245.3 267.6,243.2 275.3,240.5 283.5,237.3 291.9,233.8 300.0,230.6 308.0,227.9 316.3,225.9 324.7,224.3 333.1,223.2 341.6,222.1 350.0,221.0 358.5,219.5 367.1,217.8 375.7,216.0 384.1,214.0 392.3,211.9 400.0,209.6 407.1,206.9 413.7,203.5 419.9,199.8 426.1,196.4 432.4,193.8 439.0,192.2 446.1,192.4 453.4,194.4 460.9,197.5 468.3,201.1 475.4,204.4 482.0,206.7 488.2,207.8 494.1,208.2 499.8,208.1 505.2,207.8 510.3,207.4 515.0,207.2 519.3,206.9 523.1,206.3 526.6,205.5 530.0,204.8 533.4,204.3 537.0,204.3 540.8,204.9 544.5,205.9 548.3,207.1 552.1,208.4 556.0,209.4 560.0,209.9 564.3,210.0 569.1,209.7 573.9,209.2 578.4,208.7 582.3,208.2 585.0,207.8 M240.0,251.9 241.3,251.1 242.8,250.1 244.7,248.8 247.2,247.4 250.6,245.6 255.0,243.7 260.7,241.3 267.6,238.6 275.3,235.9 283.5,233.3 291.9,231.3 300.0,229.9 308.0,229.3 316.3,229.4 324.7,229.9 333.1,230.2 341.6,230.2 350.0,229.2 358.5,227.3 367.1,224.5 375.7,221.1 384.1,217.3 392.3,213.5 400.0,209.8 407.1,206.1 413.7,202.0 419.9,198.1 426.1,194.7 432.4,192.3 439.0,191.3 446.1,192.4 453.4,195.3 460.9,199.5 468.3,203.9 475.4,207.8 482.0,210.3 488.2,211.3 494.1,211.3 499.8,210.7 505.2,209.8 510.3,208.7 515.0,207.9 519.3,207.0 523.1,205.8 526.6,204.4 530.0,203.2 533.4,202.3 537.0,201.9 540.8,202.2 544.5,203.0 548.3,204.1 552.1,205.3 556.0,206.3 560.0,207.0 564.3,207.2 569.1,207.3 573.9,207.1 578.4,206.8 582.3,206.5 585.0,206.3 M240.0,253.6 241.3,252.9 242.8,252.0 244.7,250.9 247.2,249.6 250.6,248.1 255.0,246.4 260.7,244.3 267.6,241.9 275.3,239.3 283.5,236.8 291.9,234.5 300.0,232.8 308.0,231.8 316.3,231.3 324.7,231.2 333.1,231.0 341.6,230.4 350.0,229.2 358.5,227.1 367.1,224.4 375.7,221.2 384.1,217.9 392.3,214.7 400.0,211.7 407.1,208.7 413.7,205.2 419.9,201.8 426.1,199.0 432.4,197.1 439.0,196.5 446.1,198.1 453.4,201.4 460.9,205.7 468.3,210.1 475.4,213.8 482.0,215.8 488.2,216.1 494.1,215.4 499.8,213.9 505.2,212.1 510.3,210.1 515.0,208.4 519.3,206.6 523.1,204.6 526.6,202.5 530.0,200.4 533.4,198.8 537.0,197.7 540.8,197.3 544.5,197.4 548.3,197.9 552.1,198.6 556.0,199.1 560.0,199.3 564.3,199.2 569.1,198.9 573.9,198.5 578.4,198.1 582.3,197.8 585.0,197.6 M240.0,255.4 241.3,254.8 242.8,254.1 244.7,253.1 247.2,252.1 250.6,250.8 255.0,249.5 260.7,247.9 267.6,246.0 275.3,244.0 283.5,242.0 291.9,240.0 300.0,238.3 308.0,237.1 316.3,236.2 324.7,235.4 333.1,234.5 341.6,233.1 350.0,231.1 358.5,228.3 367.1,225.0 375.7,221.5 384.1,218.0 392.3,214.6 400.0,211.7 407.1,208.8 413.7,205.5 419.9,202.2 426.1,199.5 432.4,197.7 439.0,197.3 446.1,199.0 453.4,202.6 460.9,207.1 468.3,211.6 475.4,215.3 482.0,217.4 488.2,217.7 494.1,216.9 499.8,215.4 505.2,213.4 510.3,211.5 515.0,209.7 519.3,207.9 523.1,205.8 526.6,203.5 530.0,201.3 533.4,199.5 537.0,198.3 540.8,197.8 544.5,197.9 548.3,198.3 552.1,198.8 556.0,199.2 560.0,199.3 564.3,198.9 569.1,198.4 573.9,197.6 578.4,196.8 582.3,196.1 585.0,195.6 M240.0,258.0 241.3,257.4 242.8,256.7 244.7,255.8 247.2,254.7 250.6,253.4 255.0,252.0 260.7,250.3 267.6,248.2 275.3,246.0 283.5,243.8 291.9,241.7 300.0,240.0 308.0,238.8 316.3,238.1 324.7,237.5 333.1,236.8 341.6,235.7 350.0,234.0 358.5,231.4 367.1,228.2 375.7,224.6 384.1,220.9 392.3,217.3 400.0,214.0 407.1,210.7 413.7,207.0 419.9,203.4 426.1,200.4 432.4,198.4 439.0,198.0 446.1,199.8 453.4,203.6 460.9,208.5 468.3,213.5 475.4,217.6 482.0,220.0 488.2,220.5 494.1,219.8 499.8,218.2 505.2,216.2 510.3,214.0 515.0,212.0 519.3,209.9 523.1,207.3 526.6,204.6 530.0,202.0 533.4,199.7 537.0,198.0 540.8,197.0 544.5,196.6 548.3,196.5 552.1,196.5 556.0,196.4 560.0,196.0 564.3,195.2 569.1,194.1 573.9,192.9 578.4,191.7 582.3,190.7 585.0,190.0 M240.0,260.3 241.3,259.8 242.8,259.2 244.7,258.3 247.2,257.4 250.6,256.3 255.0,255.0 260.7,253.4 267.6,251.4 275.3,249.2 283.5,246.9 291.9,244.6 300.0,242.7 308.0,241.2 316.3,240.1 324.7,239.2 333.1,238.3 341.6,237.1 350.0,235.4 358.5,233.0 367.1,230.0 375.7,226.7 384.1,223.3 392.3,219.9 400.0,216.8 407.1,213.5 413.7,209.8 419.9,206.1 426.1,203.0 432.4,200.9 439.0,200.3 446.1,201.9 453.4,205.6 460.9,210.3 468.3,215.2 475.4,219.2 482.0,221.5 488.2,221.8 494.1,220.9 499.8,219.3 505.2,217.1 510.3,214.8 515.0,212.7 519.3,210.4 523.1,207.7 526.6,204.7 530.0,201.9 533.4,199.4 537.0,197.5 540.8,196.3 544.5,195.7 548.3,195.4 552.1,195.2 556.0,194.9 560.0,194.2 564.3,193.1 569.1,191.7 573.9,190.1 578.4,188.5 582.3,187.2 585.0,186.2 M240.0,263.0 241.3,262.5 242.8,261.9 244.7,261.1 247.2,260.2 250.6,259.2 255.0,258.0 260.7,256.5 267.6,254.6 275.3,252.5 283.5,250.3 291.9,248.1 300.0,246.1 308.0,244.4 316.3,243.1 324.7,241.9 333.1,240.6 341.6,239.0 350.0,236.9 358.5,234.0 367.1,230.7 375.7,227.1 384.1,223.4 392.3,220.0 400.0,217.0 407.1,214.0 413.7,210.5 419.9,207.1 426.1,204.3 432.4,202.7 439.0,202.6 446.1,204.8 453.4,209.2 460.9,214.5 468.3,219.9 475.4,224.2 482.0,226.5 488.2,226.7 494.1,225.6 499.8,223.5 505.2,220.8 510.3,217.8 515.0,215.0 519.3,212.1 523.1,208.7 526.6,205.1 530.0,201.6 533.4,198.4 537.0,195.8 540.8,193.9 544.5,192.6 548.3,191.7 552.1,190.9 556.0,190.0 560.0,188.8 564.3,187.2 569.1,185.3 573.9,183.3 578.4,181.4 582.3,179.9 585.0,178.8 M240.0,260.0 241.3,259.5 242.8,258.9 244.7,258.2 247.2,257.3 250.6,256.4 255.0,255.5 260.7,254.4 267.6,253.3 275.3,252.2 283.5,251.2 291.9,250.3 300.0,249.6 308.0,249.0 316.3,248.6 324.7,248.1 333.1,247.2 341.6,245.7 350.0,243.3 358.5,239.9 367.1,235.7 375.7,231.1 384.1,226.3 392.3,221.7 400.0,217.7 407.1,213.8 413.7,209.6 419.9,205.7 426.1,202.5 432.4,200.7 439.0,200.6 446.1,203.1 453.4,208.0 460.9,214.1 468.3,220.3 475.4,225.5 482.0,228.6 488.2,229.4 494.1,228.7 499.8,227.0 505.2,224.6 510.3,221.8 515.0,219.0 519.3,215.9 523.1,212.3 526.6,208.4 530.0,204.5 533.4,200.9 537.0,197.9 540.8,195.6 544.5,193.8 548.3,192.4 552.1,191.0 556.0,189.5 560.0,187.7 564.3,185.3 569.1,182.6 573.9,179.8 578.4,177.2 582.3,175.0 585.0,173.5 M240.0,261.5 241.3,260.9 242.8,260.2 244.7,259.4 247.2,258.4 250.6,257.2 255.0,256.0 260.7,254.7 267.6,253.4 275.3,252.3 283.5,251.5 291.9,251.0 300.0,250.7 308.0,250.8 316.3,251.0 324.7,251.0 333.1,250.6 341.6,249.3 350.0,247.1 358.5,243.7 367.1,239.4 375.7,234.4 384.1,229.2 392.3,224.1 400.0,219.6 407.1,215.3 413.7,210.7 419.9,206.5 426.1,203.2 432.4,201.2 439.0,201.2 446.1,204.0 453.4,209.2 460.9,215.8 468.3,222.5 475.4,228.1 482.0,231.5 488.2,232.5 494.1,231.8 499.8,230.0 505.2,227.4 510.3,224.3 515.0,221.2 519.3,217.8 523.1,213.7 526.6,209.3 530.0,204.9 533.4,200.8 537.0,197.3 540.8,194.4 544.5,192.1 548.3,190.2 552.1,188.3 556.0,186.3 560.0,183.9 564.3,181.1 569.1,177.9 573.9,174.6 578.4,171.6 582.3,169.2 585.0,167.5 M240.0,270.7 241.3,270.3 242.8,269.9 244.7,269.4 247.2,268.7 250.6,267.9 255.0,267.0 260.7,265.7 267.6,264.1 275.3,262.0 283.5,259.6 291.9,256.9 300.0,254.3 308.0,251.8 316.3,249.6 324.7,247.5 333.1,245.4 341.6,243.2 350.0,240.7 358.5,237.8 367.1,234.7 375.7,231.4 384.1,228.4 392.3,225.6 400.0,223.2 407.1,220.7 413.7,217.6 419.9,214.5 426.1,212.0 432.4,210.6 439.0,210.7 446.1,213.3 453.4,218.0 460.9,223.6 468.3,229.0 475.4,233.1 482.0,234.9 488.2,234.3 494.1,232.1 499.8,228.9 505.2,225.1 510.3,220.9 515.0,217.0 519.3,212.8 523.1,208.2 526.6,203.3 530.0,198.5 533.4,194.1 537.0,190.3 540.8,187.4 544.5,185.1 548.3,183.2 552.1,181.5 556.0,179.8 560.0,177.8 564.3,175.3 569.1,172.6 573.9,169.9 578.4,167.4 582.3,165.4 585.0,164.0 M240.0,270.0 241.3,269.5 242.8,268.8 244.7,267.9 247.2,266.8 250.6,265.5 255.0,264.0 260.7,262.1 267.6,259.8 275.3,257.5 283.5,255.1 291.9,252.8 300.0,250.7 308.0,249.1 316.3,247.9 324.7,246.9 333.1,245.9 341.6,244.8 350.0,243.3 358.5,241.2 367.1,238.7 375.7,235.9 384.1,233.0 392.3,230.2 400.0,227.7 407.1,224.9 413.7,221.5 419.9,218.1 426.1,215.3 432.4,213.6 439.0,213.6 446.1,216.1 453.4,220.9 460.9,226.7 468.3,232.4 475.4,236.8 482.0,238.8 488.2,238.3 494.1,236.3 499.8,233.2 505.2,229.3 510.3,225.0 515.0,220.9 519.3,216.5 523.1,211.5 526.6,206.2 530.0,201.0 533.4,196.1 537.0,191.8 540.8,188.4 544.5,185.5 548.3,182.9 552.1,180.5 556.0,178.0 560.0,175.3 564.3,171.9 569.1,168.2 573.9,164.4 578.4,161.0 582.3,158.1 585.0,156.0" fill="none" stroke="#86e3da" stroke-opacity="0.44" stroke-width="0.80"/><path d="M240.0,267.4 243.8,267.3 249.1,267.5 255.3,268.0 262.0,268.6 268.8,269.1 275.0,269.0 280.7,268.1 286.1,266.3 291.6,263.9 297.2,261.4 303.3,259.0 310.0,257.0 317.5,255.4 325.6,254.0 334.1,252.3 342.8,250.0 351.5,247.0 360.0,243.2 368.3,238.6 376.7,233.3 385.0,228.3 393.3,224.3 401.7,221.8 410.0,221.3 418.5,222.9 427.1,225.9 435.7,229.7 444.1,233.7 452.3,237.5 460.0,240.7 467.2,243.4 474.1,245.9 480.7,248.3 487.0,250.3 493.1,252.0 499.0,253.2 504.8,254.2 510.4,255.0 515.9,255.9 521.0,256.8 525.7,257.7 530.0,258.5 533.6,259.3 536.7,260.2 539.3,261.0 541.8,261.5 544.3,261.5 547.0,261.0 549.9,259.8 552.9,258.1 555.8,255.9 558.8,253.5 561.9,251.1 565.0,248.8 568.4,246.4 572.3,243.7 576.1,241.0 579.7,238.5 582.8,236.3 585.0,234.8 M240.0,271.9 243.8,272.2 249.1,273.0 255.3,274.0 262.0,274.9 268.8,275.2 275.0,274.7 280.7,273.0 286.1,270.3 291.6,266.9 297.2,263.1 303.3,259.2 310.0,255.6 317.5,252.4 325.6,249.8 334.1,247.6 342.8,245.8 351.5,244.4 360.0,243.0 368.3,241.1 376.7,238.9 385.0,236.7 393.3,234.9 401.7,233.7 410.0,233.3 418.5,233.9 427.1,234.5 435.7,235.1 444.1,235.4 452.3,235.5 460.0,235.5 467.2,235.9 474.1,237.2 480.7,239.1 487.0,241.6 493.1,244.4 499.0,247.4 504.8,250.6 510.4,254.0 515.9,257.4 521.0,260.7 525.7,263.7 530.0,266.3 533.6,268.3 536.7,270.1 539.3,271.4 541.8,272.3 544.3,272.6 547.0,272.3 549.9,271.2 552.9,269.3 555.8,266.8 558.8,263.8 561.9,260.7 565.0,257.4 568.4,253.8 572.3,249.4 576.1,244.8 579.7,240.3 582.8,236.5 585.0,233.7 M240.0,272.3 243.8,272.0 249.1,271.7 255.3,271.3 262.0,270.9 268.8,270.2 275.0,269.1 280.7,267.4 286.1,265.0 291.6,262.3 297.2,259.7 303.3,257.5 310.0,256.1 317.5,255.7 325.6,256.2 334.1,256.9 342.8,257.5 351.5,257.4 360.0,256.3 368.3,253.6 376.7,249.6 385.0,245.0 393.3,240.4 401.7,236.4 410.0,233.7 418.5,232.5 427.1,232.2 435.7,232.7 444.1,233.8 452.3,235.1 460.0,236.4 467.2,238.0 474.1,240.1 480.7,242.5 487.0,245.1 493.1,247.6 499.0,249.9 504.8,252.0 510.4,254.1 515.9,256.2 521.0,258.1 525.7,259.8 530.0,261.1 533.6,262.3 536.7,263.3 539.3,263.9 541.8,264.3 544.3,264.1 547.0,263.4 549.9,262.0 552.9,259.9 555.8,257.3 558.8,254.5 561.9,251.6 565.0,248.7 568.4,245.6 572.3,242.1 576.1,238.5 579.7,235.1 582.8,232.2 585.0,230.1 M240.0,281.4 243.8,281.3 249.1,281.1 255.3,280.7 262.0,280.0 268.8,278.8 275.0,277.1 280.7,274.6 286.1,271.4 291.6,267.7 297.2,264.1 303.3,260.7 310.0,257.8 317.5,255.9 325.6,254.7 334.1,253.9 342.8,253.2 351.5,252.2 360.0,250.6 368.3,247.8 376.7,244.1 385.0,240.2 393.3,236.6 401.7,234.0 410.0,232.9 418.5,233.4 427.1,235.1 435.7,237.5 444.1,240.1 452.3,242.8 460.0,245.1 467.2,247.3 474.1,249.7 480.7,252.2 487.0,254.5 493.1,256.6 499.0,258.3 504.8,259.7 510.4,261.0 515.9,262.1 521.0,263.0 525.7,263.7 530.0,264.1 533.6,264.4 536.7,264.6 539.3,264.6 541.8,264.3 544.3,263.4 547.0,262.1 549.9,260.0 552.9,257.3 555.8,254.1 558.8,250.7 561.9,247.2 565.0,243.8 568.4,240.1 572.3,236.1 576.1,232.0 579.7,228.2 582.8,225.0 585.0,222.7 M240.0,281.7 243.8,280.9 249.1,279.9 255.3,278.6 262.0,277.1 268.8,275.3 275.0,273.3 280.7,270.8 286.1,267.9 291.6,264.8 297.2,261.9 303.3,259.5 310.0,258.0 317.5,257.7 325.6,258.4 334.1,259.5 342.8,260.5 351.5,260.7 360.0,259.7 368.3,256.9 376.7,252.6 385.0,247.5 393.3,242.3 401.7,237.9 410.0,234.9 418.5,233.6 427.1,233.7 435.7,234.9 444.1,237.0 452.3,239.6 460.0,242.3 467.2,245.1 474.1,248.4 480.7,251.8 487.0,255.1 493.1,258.2 499.0,260.7 504.8,262.8 510.4,264.6 515.9,266.1 521.0,267.2 525.7,268.0 530.0,268.4 533.6,268.5 536.7,268.4 539.3,268.1 541.8,267.4 544.3,266.2 547.0,264.5 549.9,262.0 552.9,258.9 555.8,255.3 558.8,251.4 561.9,247.5 565.0,243.6 568.4,239.5 572.3,235.0 576.1,230.4 579.7,226.1 582.8,222.5 585.0,220.0 M240.0,280.3 243.8,280.1 249.1,279.9 255.3,279.7 262.0,279.4 268.8,278.8 275.0,277.8 280.7,276.1 286.1,273.7 291.6,271.0 297.2,268.3 303.3,265.8 310.0,263.9 317.5,262.8 325.6,262.4 334.1,262.1 342.8,261.7 351.5,260.7 360.0,258.9 368.3,255.7 376.7,251.4 385.0,246.8 393.3,242.5 401.7,239.2 410.0,237.6 418.5,237.6 427.1,238.9 435.7,240.9 444.1,243.4 452.3,245.8 460.0,247.9 467.2,249.9 474.1,252.2 480.7,254.5 487.0,256.7 493.1,258.7 499.0,260.3 504.8,261.6 510.4,262.8 515.9,263.8 521.0,264.6 525.7,265.2 530.0,265.6 533.6,265.7 536.7,265.6 539.3,265.3 541.8,264.6 544.3,263.5 547.0,261.9 549.9,259.6 552.9,256.6 555.8,253.3 558.8,249.7 561.9,246.0 565.0,242.4 568.4,238.6 572.3,234.4 576.1,230.0 579.7,226.0 582.8,222.5 585.0,220.1 M240.0,283.7 243.8,283.3 249.1,282.8 255.3,282.2 262.0,281.4 268.8,280.3 275.0,278.8 280.7,276.8 286.1,274.1 291.6,271.3 297.2,268.5 303.3,266.0 310.0,264.3 317.5,263.6 325.6,263.7 334.1,264.2 342.8,264.6 351.5,264.4 360.0,263.1 368.3,260.3 376.7,256.2 385.0,251.5 393.3,246.8 401.7,243.0 410.0,240.6 418.5,240.0 427.1,240.6 435.7,242.0 444.1,244.1 452.3,246.3 460.0,248.4 467.2,250.6 474.1,253.1 480.7,255.7 487.0,258.3 493.1,260.6 499.0,262.5 504.8,264.1 510.4,265.5 515.9,266.6 521.0,267.4 525.7,267.9 530.0,268.1 533.6,267.9 536.7,267.6 539.3,266.9 541.8,265.9 544.3,264.5 547.0,262.5 549.9,259.8 552.9,256.5 555.8,252.8 558.8,248.8 561.9,244.7 565.0,240.7 568.4,236.4 572.3,231.7 576.1,227.0 579.7,222.5 582.8,218.7 585.0,216.0 M240.0,284.4 243.8,284.2 249.1,284.0 255.3,283.7 262.0,283.2 268.8,282.5 275.0,281.3 280.7,279.5 286.1,277.2 291.6,274.5 297.2,271.8 303.3,269.4 310.0,267.6 317.5,266.7 325.6,266.6 334.1,266.7 342.8,266.8 351.5,266.3 360.0,264.9 368.3,262.0 376.7,257.9 385.0,253.3 393.3,248.9 401.7,245.4 410.0,243.4 418.5,243.1 427.1,243.9 435.7,245.6 444.1,247.6 452.3,249.7 460.0,251.6 467.2,253.4 474.1,255.5 480.7,257.7 487.0,259.9 493.1,261.9 499.0,263.5 504.8,264.8 510.4,265.9 515.9,266.8 521.0,267.5 525.7,267.9 530.0,267.9 533.6,267.7 536.7,267.2 539.3,266.4 541.8,265.2 544.3,263.6 547.0,261.5 549.9,258.7 552.9,255.3 555.8,251.5 558.8,247.4 561.9,243.3 565.0,239.2 568.4,234.9 572.3,230.1 576.1,225.3 579.7,220.7 582.8,216.8 585.0,214.0 M240.0,286.4 243.8,285.8 249.1,285.2 255.3,284.5 262.0,283.6 268.8,282.5 275.0,281.2 280.7,279.4 286.1,277.1 291.6,274.7 297.2,272.3 303.3,270.4 310.0,269.1 317.5,268.9 325.6,269.5 334.1,270.4 342.8,271.1 351.5,271.0 360.0,269.8 368.3,266.7 376.7,262.3 385.0,257.1 393.3,251.9 401.7,247.6 410.0,244.9 418.5,244.0 427.1,244.4 435.7,245.9 444.1,248.1 452.3,250.5 460.0,252.8 467.2,255.1 474.1,257.7 480.7,260.4 487.0,263.0 493.1,265.3 499.0,267.1 504.8,268.4 510.4,269.5 515.9,270.2 521.0,270.6 525.7,270.6 530.0,270.2 533.6,269.5 536.7,268.6 539.3,267.3 541.8,265.7 544.3,263.6 547.0,261.0 549.9,257.8 552.9,253.9 555.8,249.7 558.8,245.1 561.9,240.5 565.0,236.0 568.4,231.3 572.3,226.1 576.1,220.8 579.7,215.9 582.8,211.8 585.0,208.8 M240.0,289.0 243.8,288.5 249.1,288.0 255.3,287.2 262.0,286.3 268.8,285.1 275.0,283.6 280.7,281.6 286.1,279.1 291.6,276.4 297.2,273.7 303.3,271.4 310.0,269.6 317.5,268.9 325.6,269.0 334.1,269.5 342.8,270.0 351.5,270.0 360.0,269.0 368.3,266.5 376.7,262.8 385.0,258.5 393.3,254.3 401.7,251.0 410.0,249.2 418.5,249.2 427.1,250.3 435.7,252.3 444.1,254.6 452.3,256.9 460.0,258.8 467.2,260.6 474.1,262.6 480.7,264.7 487.0,266.6 493.1,268.2 499.0,269.3 504.8,270.0 510.4,270.4 515.9,270.6 521.0,270.5 525.7,270.1 530.0,269.4 533.6,268.4 536.7,267.1 539.3,265.6 541.8,263.7 544.3,261.3 547.0,258.5 549.9,255.1 552.9,251.0 555.8,246.6 558.8,241.9 561.9,237.2 565.0,232.5 568.4,227.7 572.3,222.3 576.1,216.9 579.7,211.9 582.8,207.7 585.0,204.7 M240.0,286.2 243.8,285.8 249.1,285.3 255.3,284.9 262.0,284.5 268.8,283.9 275.0,283.2 280.7,282.0 286.1,280.3 291.6,278.4 297.2,276.7 303.3,275.3 310.0,274.7 317.5,275.0 325.6,276.1 334.1,277.4 342.8,278.4 351.5,278.6 360.0,277.5 368.3,274.4 376.7,269.8 385.0,264.4 393.3,258.9 401.7,254.1 410.0,250.9 418.5,249.4 427.1,249.2 435.7,250.0 444.1,251.5 452.3,253.2 460.0,254.9 467.2,256.6 474.1,258.8 480.7,261.2 487.0,263.6 493.1,265.8 499.0,267.7 504.8,269.1 510.4,270.3 515.9,271.3 521.0,271.9 525.7,272.0 530.0,271.8 533.6,271.1 536.7,270.1 539.3,268.7 541.8,266.9 544.3,264.6 547.0,261.9 549.9,258.6 552.9,254.6 555.8,250.2 558.8,245.6 561.9,240.9 565.0,236.2 568.4,231.3 572.3,225.9 576.1,220.3 579.7,215.1 582.8,210.6 585.0,207.4 M240.0,295.8 243.8,295.5 249.1,295.0 255.3,294.1 262.0,292.7 268.8,290.9 275.0,288.8 280.7,286.2 286.1,283.2 291.6,280.0 297.2,276.9 303.3,274.3 310.0,272.4 317.5,271.8 325.6,272.4 334.1,273.9 342.8,275.6 351.5,277.0 360.0,277.4 368.3,275.9 376.7,272.9 385.0,268.7 393.3,264.2 401.7,260.1 410.0,257.0 418.5,255.3 427.1,254.5 435.7,254.5 444.1,255.0 452.3,255.9 460.0,256.8 467.2,258.0 474.1,259.9 480.7,262.2 487.0,264.6 493.1,267.0 499.0,269.0 504.8,270.8 510.4,272.3 515.9,273.4 521.0,274.2 525.7,274.4 530.0,274.1 533.6,273.3 536.7,272.1 539.3,270.4 541.8,268.3 544.3,265.7 547.0,262.7 549.9,259.0 552.9,254.6 555.8,249.8 558.8,244.7 561.9,239.5 565.0,234.3 568.4,228.8 572.3,222.6 576.1,216.4 579.7,210.5 582.8,205.5 585.0,201.9 M240.0,291.0 243.8,290.3 249.1,289.5 255.3,288.5 262.0,287.4 268.8,286.1 275.0,284.8 280.7,283.1 286.1,281.0 291.6,278.8 297.2,276.7 303.3,275.1 310.0,274.2 317.5,274.4 325.6,275.6 334.1,277.3 342.8,279.0 351.5,280.2 360.0,280.2 368.3,278.4 376.7,275.1 385.0,271.1 393.3,267.0 401.7,263.5 410.0,261.4 418.5,260.9 427.1,261.5 435.7,262.6 444.1,264.0 452.3,265.3 460.0,266.1 467.2,266.7 474.1,267.5 480.7,268.4 487.0,269.3 493.1,269.9 499.0,270.0 504.8,269.8 510.4,269.4 515.9,268.8 521.0,268.0 525.7,267.0 530.0,265.6 533.6,264.0 536.7,262.1 539.3,259.9 541.8,257.4 544.3,254.4 547.0,251.1 549.9,247.3 552.9,242.9 555.8,238.1 558.8,233.2 561.9,228.2 565.0,223.5 568.4,218.5 572.3,213.2 576.1,207.9 579.7,202.9 582.8,198.8 585.0,195.8 M240.0,299.2 243.8,299.7 249.1,300.3 255.3,300.6 262.0,300.3 268.8,299.3 275.0,297.7 280.7,295.3 286.1,292.3 291.6,289.0 297.2,285.5 303.3,282.1 310.0,279.2 317.5,277.2 325.6,276.2 334.1,276.0 342.8,276.5 351.5,277.0 360.0,277.1 368.3,275.9 376.7,273.7 385.0,270.8 393.3,268.0 401.7,265.6 410.0,264.4 418.5,264.4 427.1,265.0 435.7,265.7 444.1,266.3 452.3,266.5 460.0,266.2 467.2,265.8 474.1,265.9 480.7,266.3 487.0,266.9 493.1,267.5 499.0,268.0 504.8,268.4 510.4,268.8 515.9,269.2 521.0,269.4 525.7,269.4 530.0,269.0 533.6,268.1 536.7,266.8 539.3,265.1 541.8,262.9 544.3,260.4 547.0,257.5 549.9,254.1 552.9,250.1 555.8,245.6 558.8,241.0 561.9,236.2 565.0,231.6 568.4,226.6 572.3,221.1 576.1,215.5 579.7,210.1 582.8,205.4 585.0,201.9" fill="none" stroke="#86e3da" stroke-opacity="0.42" stroke-width="0.80"/><path d="M240.0,247.9 246.6,249.7 255.9,252.0 266.9,253.6 278.5,253.2 289.9,250.3 300.0,245.9 308.9,241.2 317.4,236.6 325.6,232.6 333.7,229.2 341.8,226.7 350.0,225.2 358.3,224.4 366.7,224.4 375.0,224.9 383.3,225.8 391.7,226.7 400.0,227.3 408.3,227.4 416.7,226.3 425.0,224.2 433.3,221.2 441.7,217.9 450.0,214.7 458.3,212.5 466.7,211.8 475.1,212.6 483.4,214.6 491.7,217.5 500.0,220.5 508.4,223.1 516.9,225.1 525.4,226.3 533.7,226.8 541.6,226.5 549.0,226.0 556.2,225.4 563.3,224.5 570.1,223.5 576.1,222.4 581.2,221.4 585.0,220.5 M240.0,249.5 246.6,247.5 255.9,244.8 266.9,242.0 278.5,239.5 289.9,237.6 300.0,236.4 308.9,235.7 317.4,235.6 325.6,235.6 333.7,235.8 341.8,235.9 350.0,235.8 358.3,235.2 366.7,234.1 375.0,232.8 383.3,231.5 391.7,230.2 400.0,229.2 408.3,228.4 416.7,227.6 425.0,226.8 433.3,226.0 441.7,225.3 450.0,224.8 458.3,224.8 466.7,225.5 475.1,226.4 483.4,227.1 491.7,227.2 500.0,226.3 508.4,224.1 516.9,221.0 525.4,217.5 533.7,214.2 541.6,211.7 549.0,210.5 556.2,210.7 563.3,211.9 570.1,213.9 576.1,216.1 581.2,218.2 585.0,219.6 M240.0,249.9 246.6,249.6 255.9,249.3 266.9,249.2 278.5,249.2 289.9,249.2 300.0,249.1 308.9,249.0 317.4,248.9 325.6,248.6 333.7,248.0 341.8,247.0 350.0,245.4 358.3,243.1 366.7,240.1 375.0,236.6 383.3,233.1 391.7,229.7 400.0,226.7 408.3,224.2 416.7,221.9 425.0,219.9 433.3,218.4 441.7,217.3 450.0,216.8 458.3,217.3 466.7,218.8 475.1,220.9 483.4,223.1 491.7,224.9 500.0,226.0 508.4,225.7 516.9,224.5 525.4,222.8 533.7,221.2 541.6,220.2 549.0,220.2 556.2,221.6 563.3,224.1 570.1,226.9 576.1,229.8 581.2,232.3 585.0,233.8 M240.0,254.6 246.6,254.8 255.9,255.1 266.9,255.3 278.5,255.1 289.9,254.0 300.0,252.4 308.9,250.5 317.4,248.5 325.6,246.4 333.7,244.2 341.8,241.9 350.0,239.4 358.3,236.8 366.7,234.2 375.0,231.9 383.3,230.0 391.7,228.7 400.0,228.2 408.3,228.3 416.7,228.4 425.0,228.6 433.3,228.7 441.7,228.7 450.0,228.5 458.3,228.6 466.7,229.2 475.1,229.8 483.4,230.2 491.7,230.2 500.0,229.3 508.4,227.4 516.9,224.6 525.4,221.8 533.7,219.4 541.6,218.1 549.0,218.4 556.2,220.3 563.3,223.5 570.1,227.2 576.1,230.8 581.2,233.9 585.0,235.8 M240.0,258.7 246.6,258.4 255.9,258.0 266.9,257.3 278.5,256.2 289.9,254.8 300.0,253.2 308.9,251.7 317.4,250.3 325.6,248.9 333.7,247.4 341.8,245.7 350.0,243.8 358.3,241.4 366.7,238.8 375.0,236.1 383.3,233.7 391.7,231.8 400.0,230.6 408.3,229.9 416.7,229.6 425.0,229.4 433.3,229.5 441.7,229.7 450.0,230.1 458.3,230.9 466.7,232.2 475.1,233.7 483.4,234.8 491.7,235.2 500.0,234.5 508.4,232.2 516.9,228.7 525.4,224.7 533.7,221.1 541.6,218.4 549.0,217.6 556.2,218.8 563.3,221.7 570.1,225.4 576.1,229.4 581.2,232.9 585.0,235.2 M240.0,260.6 246.6,260.0 255.9,259.1 266.9,258.0 278.5,256.9 289.9,255.7 300.0,254.5 308.9,253.6 317.4,252.8 325.6,252.1 333.7,251.2 341.8,250.0 350.0,248.4 358.3,246.3 366.7,243.6 375.0,240.8 383.3,238.0 391.7,235.6 400.0,233.8 408.3,232.5 416.7,231.5 425.0,230.9 433.3,230.6 441.7,230.6 450.0,230.9 458.3,231.8 466.7,233.4 475.1,235.3 483.4,236.9 491.7,237.8 500.0,237.6 508.4,235.7 516.9,232.3 525.4,228.2 533.7,224.3 541.6,221.4 549.0,220.2 556.2,221.2 563.3,224.0 570.1,227.7 576.1,231.7 581.2,235.2 585.0,237.6 M240.0,263.9 246.6,263.1 255.9,261.9 266.9,260.5 278.5,259.0 289.9,257.5 300.0,256.2 308.9,255.2 317.4,254.4 325.6,253.7 333.7,253.0 341.8,252.0 350.0,250.6 358.3,248.7 366.7,246.3 375.0,243.7 383.3,241.1 391.7,238.8 400.0,237.1 408.3,235.9 416.7,235.0 425.0,234.3 433.3,234.0 441.7,233.9 450.0,234.0 458.3,234.8 466.7,236.2 475.1,237.9 483.4,239.4 491.7,240.2 500.0,239.8 508.4,237.7 516.9,234.0 525.4,229.7 533.7,225.5 541.6,222.4 549.0,221.3 556.2,222.5 563.3,225.7 570.1,229.9 576.1,234.4 581.2,238.3 585.0,240.9 M240.0,263.3 246.6,262.2 255.9,261.1 266.9,260.2 278.5,259.7 289.9,259.6 300.0,259.6 308.9,259.6 317.4,259.6 325.6,259.5 333.7,258.9 341.8,257.8 350.0,256.1 358.3,253.5 366.7,250.2 375.0,246.7 383.3,243.2 391.7,240.2 400.0,238.0 408.3,236.6 416.7,235.7 425.0,235.4 433.3,235.6 441.7,236.2 450.0,237.0 458.3,238.3 466.7,240.2 475.1,242.1 483.4,243.5 491.7,244.0 500.0,243.1 508.4,240.1 516.9,235.4 525.4,230.0 533.7,224.9 541.6,221.2 549.0,219.8 556.2,221.3 563.3,225.0 570.1,230.2 576.1,235.7 581.2,240.6 585.0,243.9 M240.0,270.6 246.6,270.5 255.9,269.9 266.9,268.6 278.5,266.6 289.9,264.1 300.0,261.7 308.9,259.7 317.4,258.1 325.6,256.7 333.7,255.6 341.8,254.5 350.0,253.2 358.3,251.7 366.7,250.0 375.0,248.3 383.3,246.8 391.7,245.6 400.0,244.9 408.3,244.6 416.7,244.4 425.0,244.1 433.3,243.7 441.7,243.2 450.0,242.5 458.3,242.2 466.7,242.2 475.1,242.4 483.4,242.4 491.7,241.8 500.0,240.3 508.4,237.1 516.9,232.6 525.4,227.8 533.7,223.7 541.6,221.1 549.0,221.0 556.2,223.8 563.3,229.0 570.1,235.4 576.1,241.9 581.2,247.5 585.0,251.2 M240.0,266.7 246.6,267.1 255.9,267.8 266.9,268.7 278.5,269.4 289.9,269.6 300.0,269.4 308.9,269.0 317.4,268.4 325.6,267.5 333.7,266.2 341.8,264.3 350.0,261.8 358.3,258.5 366.7,254.6 375.0,250.6 383.3,246.6 391.7,243.3 400.0,240.8 408.3,239.1 416.7,238.2 425.0,237.9 433.3,238.2 441.7,239.0 450.0,240.2 458.3,242.1 466.7,244.6 475.1,247.4 483.4,249.7 491.7,251.0 500.0,250.9 508.4,248.5 516.9,244.0 525.4,238.4 533.7,232.7 541.6,228.2 549.0,226.0 556.2,226.9 563.3,230.2 570.1,235.0 576.1,240.2 581.2,244.9 585.0,248.0 M240.0,273.2 246.6,271.1 255.9,268.1 266.9,264.9 278.5,262.0 289.9,260.1 300.0,259.1 308.9,259.1 317.4,259.8 325.6,260.9 333.7,262.2 341.8,263.3 350.0,264.0 358.3,264.1 366.7,263.3 375.0,262.0 383.3,260.2 391.7,258.3 400.0,256.4 408.3,254.6 416.7,252.6 425.0,250.5 433.3,248.3 441.7,246.2 450.0,244.1 458.3,242.6 466.7,241.9 475.1,241.8 483.4,241.8 491.7,241.5 500.0,240.5 508.4,238.0 516.9,234.2 525.4,230.0 533.7,226.4 541.6,224.5 549.0,225.1 556.2,229.0 563.3,235.5 570.1,243.2 576.1,250.9 581.2,257.4 585.0,261.7 M240.0,265.8 246.6,264.8 255.9,263.7 266.9,262.8 278.5,262.4 289.9,262.6 300.0,263.1 308.9,264.1 317.4,265.3 325.6,266.6 333.7,267.8 341.8,268.7 350.0,269.1 358.3,268.8 366.7,267.6 375.0,266.0 383.3,264.2 391.7,262.4 400.0,260.9 408.3,259.7 416.7,258.5 425.0,257.4 433.3,256.2 441.7,254.9 450.0,253.5 458.3,252.5 466.7,251.9 475.1,251.5 483.4,250.7 491.7,249.1 500.0,246.5 508.4,241.8 516.9,235.3 525.4,228.3 533.7,221.9 541.6,217.5 549.0,216.1 556.2,218.5 563.3,224.1 570.1,231.4 576.1,239.2 581.2,246.1 585.0,250.8" fill="none" stroke="#86e3da" stroke-opacity="0.40" stroke-width="0.80"/></g>
<g fill="#fff">
<rect x="27" y="24.300" width="262" height="3.600"/>
<rect x="377" y="24.300" width="171" height="3.600"/>
<rect x="27" y="24.300" width="3.600" height="251"/>
<rect x="544.400" y="24.300" width="3.600" height="251"/>
<rect x="27" y="271.800" width="64" height="3.600"/>
<rect x="298" y="271.800" width="250" height="3.600"/>
</g>
<rect x="65.500" y="0" width="85" height="85.300" fill="#a31e2c"/>
<path d="M129,59.200 H137.800 V20.900 H92 V33.600 L76.300,29.600 V51.600 L92,47.600 V59.200 H102.400" fill="none" stroke="#fff" stroke-width="5" stroke-linejoin="round" stroke-linecap="round"/>
<circle cx="119.500" cy="59.700" r="10.200" fill="#fff"/>
<circle cx="305" cy="222" r="4.0" fill="url(#glow)"/>
<circle cx="305" cy="222" r="1.5" fill="#fff"/>
<circle cx="300" cy="246" r="3.2" fill="url(#glow)"/>
<circle cx="300" cy="246" r="1.2" fill="#fff"/>
<circle cx="330" cy="232" r="2.4" fill="url(#glow)"/>
<circle cx="330" cy="232" r="0.9" fill="#fff"/>
<circle cx="262" cy="205" r="2.8" fill="url(#glow)"/>
<circle cx="262" cy="205" r="1.0" fill="#fff"/>
<circle cx="268" cy="215" r="2.4" fill="url(#glow)"/>
<circle cx="268" cy="215" r="0.9" fill="#fff"/>
<circle cx="276" cy="198" r="2.8" fill="url(#glow)"/>
<circle cx="276" cy="198" r="1.0" fill="#fff"/>
<circle cx="285" cy="222" r="3.2" fill="url(#glow)"/>
<circle cx="285" cy="222" r="1.2" fill="#fff"/>
<circle cx="250" cy="228" r="2.0" fill="url(#glow)"/>
<circle cx="250" cy="228" r="0.8" fill="#fff"/>
<circle cx="5" cy="262" r="2.8" fill="url(#glow)"/>
<circle cx="5" cy="262" r="1.0" fill="#fff"/>
<circle cx="10" cy="267" r="2.0" fill="url(#glow)"/>
<circle cx="10" cy="267" r="0.8" fill="#fff"/>
<circle cx="45" cy="282" r="2.4" fill="url(#glow)"/>
<circle cx="45" cy="282" r="0.9" fill="#fff"/>
<circle cx="186" cy="207" r="3.2" fill="url(#glow)"/>
<circle cx="186" cy="207" r="1.2" fill="#fff"/>
<circle cx="166" cy="202" r="2.4" fill="url(#glow)"/>
<circle cx="166" cy="202" r="0.9" fill="#fff"/>
<circle cx="200" cy="196" r="2.4" fill="url(#glow)"/>
<circle cx="200" cy="196" r="0.9" fill="#fff"/>
<circle cx="210" cy="200" r="2.4" fill="url(#glow)"/>
<circle cx="210" cy="200" r="0.9" fill="#fff"/>
<circle cx="225" cy="187" r="2.0" fill="url(#glow)"/>
<circle cx="225" cy="187" r="0.8" fill="#fff"/>
<circle cx="255" cy="175" r="2.4" fill="url(#glow)"/>
<circle cx="255" cy="175" r="0.9" fill="#fff"/>
<circle cx="275" cy="160" r="3.2" fill="url(#glow)"/>
<circle cx="275" cy="160" r="1.2" fill="#fff"/>
<circle cx="292" cy="147" r="3.6" fill="url(#glow)"/>
<circle cx="292" cy="147" r="1.4" fill="#fff"/>
<circle cx="270" cy="159" r="2.4" fill="url(#glow)"/>
<circle cx="270" cy="159" r="0.9" fill="#fff"/>
<circle cx="424" cy="153" r="2.8" fill="url(#glow)"/>
<circle cx="424" cy="153" r="1.0" fill="#fff"/>
<circle cx="436" cy="161" r="3.2" fill="url(#glow)"/>
<circle cx="436" cy="161" r="1.2" fill="#fff"/>
<circle cx="446" cy="160" r="2.8" fill="url(#glow)"/>
<circle cx="446" cy="160" r="1.0" fill="#fff"/>
<circle cx="455" cy="158" r="3.2" fill="url(#glow)"/>
<circle cx="455" cy="158" r="1.2" fill="#fff"/>
<circle cx="462" cy="162" r="3.2" fill="url(#glow)"/>
<circle cx="462" cy="162" r="1.2" fill="#fff"/>
<circle cx="440" cy="180" r="3.2" fill="url(#glow)"/>
<circle cx="440" cy="180" r="1.2" fill="#fff"/>
<circle cx="449" cy="177" r="2.8" fill="url(#glow)"/>
<circle cx="449" cy="177" r="1.0" fill="#fff"/>
<circle cx="458" cy="173" r="2.8" fill="url(#glow)"/>
<circle cx="458" cy="173" r="1.0" fill="#fff"/>
<circle cx="410" cy="190" r="2.4" fill="url(#glow)"/>
<circle cx="410" cy="190" r="0.9" fill="#fff"/>
<circle cx="400" cy="195" r="2.4" fill="url(#glow)"/>
<circle cx="400" cy="195" r="0.9" fill="#fff"/>
<circle cx="508" cy="166" r="4.0" fill="url(#glow)"/>
<circle cx="508" cy="166" r="1.5" fill="#fff"/>
<circle cx="515" cy="163" r="3.2" fill="url(#glow)"/>
<circle cx="515" cy="163" r="1.2" fill="#fff"/>
<circle cx="520" cy="170" r="3.2" fill="url(#glow)"/>
<circle cx="520" cy="170" r="1.2" fill="#fff"/>
<circle cx="530" cy="168" r="2.8" fill="url(#glow)"/>
<circle cx="530" cy="168" r="1.0" fill="#fff"/>
<circle cx="540" cy="176" r="3.2" fill="url(#glow)"/>
<circle cx="540" cy="176" r="1.2" fill="#fff"/>
<circle cx="517" cy="180" r="3.6" fill="url(#glow)"/>
<circle cx="517" cy="180" r="1.4" fill="#fff"/>
<circle cx="505" cy="185" r="2.8" fill="url(#glow)"/>
<circle cx="505" cy="185" r="1.0" fill="#fff"/>
<circle cx="528" cy="184" r="2.4" fill="url(#glow)"/>
<circle cx="528" cy="184" r="0.9" fill="#fff"/>
<circle cx="555" cy="186" r="4.0" fill="url(#glow)"/>
<circle cx="555" cy="186" r="1.5" fill="#fff"/>
<circle cx="560" cy="192" r="2.8" fill="url(#glow)"/>
<circle cx="560" cy="192" r="1.0" fill="#fff"/>
<circle cx="552" cy="197" r="3.2" fill="url(#glow)"/>
<circle cx="552" cy="197" r="1.2" fill="#fff"/>
<circle cx="566" cy="180" r="2.8" fill="url(#glow)"/>
<circle cx="566" cy="180" r="1.0" fill="#fff"/>
<circle cx="548" cy="137" r="2.4" fill="url(#glow)"/>
<circle cx="548" cy="137" r="0.9" fill="#fff"/>
<circle cx="569" cy="165" r="2.4" fill="url(#glow)"/>
<circle cx="569" cy="165" r="0.9" fill="#fff"/>
<circle cx="521" cy="147" r="2.0" fill="url(#glow)"/>
<circle cx="521" cy="147" r="0.8" fill="#fff"/>
<circle cx="487" cy="206" r="3.2" fill="url(#glow)"/>
<circle cx="487" cy="206" r="1.2" fill="#fff"/>
<circle cx="517" cy="210" r="2.8" fill="url(#glow)"/>
<circle cx="517" cy="210" r="1.0" fill="#fff"/>
<circle cx="460" cy="222" r="2.8" fill="url(#glow)"/>
<circle cx="460" cy="222" r="1.0" fill="#fff"/>
<circle cx="340" cy="250" r="3.2" fill="url(#glow)"/>
<circle cx="340" cy="250" r="1.2" fill="#fff"/>
<circle cx="338" cy="268" r="3.6" fill="url(#glow)"/>
<circle cx="338" cy="268" r="1.4" fill="#fff"/>
<circle cx="352" cy="258" r="2.8" fill="url(#glow)"/>
<circle cx="352" cy="258" r="1.0" fill="#fff"/>
<circle cx="392" cy="240" r="2.8" fill="url(#glow)"/>
<circle cx="392" cy="240" r="1.0" fill="#fff"/>
<circle cx="410" cy="242" r="2.4" fill="url(#glow)"/>
<circle cx="410" cy="242" r="0.9" fill="#fff"/>
<circle cx="370" cy="272" r="2.4" fill="url(#glow)"/>
<circle cx="370" cy="272" r="0.9" fill="#fff"/>
<circle cx="300" cy="280" r="3.2" fill="url(#glow)"/>
<circle cx="300" cy="280" r="1.2" fill="#fff"/>
<circle cx="310" cy="288" r="2.8" fill="url(#glow)"/>
<circle cx="310" cy="288" r="1.0" fill="#fff"/>
<circle cx="290" cy="275" r="2.8" fill="url(#glow)"/>
<circle cx="290" cy="275" r="1.0" fill="#fff"/>
<circle cx="320" cy="283" r="2.4" fill="url(#glow)"/>
<circle cx="320" cy="283" r="0.9" fill="#fff"/>
<circle cx="515" cy="267" r="2.8" fill="url(#glow)"/>
<circle cx="515" cy="267" r="1.0" fill="#fff"/>
<circle cx="358" cy="292" r="2.4" fill="url(#glow)"/>
<circle cx="358" cy="292" r="0.9" fill="#fff"/>
<circle cx="372" cy="240" r="2.4" fill="url(#glow)"/>
<circle cx="372" cy="240" r="0.9" fill="#fff"/>
<circle cx="425" cy="240" r="2.4" fill="url(#glow)"/>
<circle cx="425" cy="240" r="0.9" fill="#fff"/>
</svg></div></div>

<!-- detailed scores -->
<div class="card" style="left:13px;top:454px;width:1162px;height:165px"></div>
<div class="box" style="left:196px;top:467px;width:171px;height:30px"></div>

<div class="box" style="left:196px;top:523px;width:171px;height:27px"></div>

<div class="box" style="left:594px;top:523px;width:170px;height:27px"></div>

<div class="box" style="left:992px;top:523px;width:170px;height:27px"></div>

<div class="box" style="left:196px;top:573px;width:171px;height:27px"></div>

<!-- additional details -->
<div class="card" style="left:13px;top:625px;width:1162px;height:120px"></div>
<div class="box" style="left:196px;top:666px;width:171px;height:27px"></div>
<div class="box" style="left:196px;top:700px;width:171px;height:27px"></div>

<!-- scrollbar -->
<div class="abs" style="left:1186px;top:68px;width:14px;height:638px;background:#f7f7f7"></div>
<div class="abs" style="left:1189px;top:81px;width:10px;height:241px;background:#c1c1c1"></div>
<svg class="abs" style="left:1189px;top:72px" width="10" height="6" viewBox="0 0 10 6"><path d="M2 5l3-3.5 3 3.5z" fill="#777"/></svg>

<!-- footer -->
<div id="footer"></div>
<div class="abs" style="left:0;top:748px;width:1200px;height:1px;background:#cfcfcf"></div>
<div class="tx" id="tb" style="left:18.00px;top:3.20px;font-size:9.5px;font-weight:normal;line-height:12px;color:#333;transform:scaleX(0.9323);">Procyon</div>
<div class="tx" id="brand" style="left:59.00px;top:30.00px;font-size:20px;font-weight:normal;line-height:26px;color:#1b1b1b;transform:scaleX(1.0276);">Procyon</div>
<div class="tx" id="n1" style="left:160.70px;top:35.70px;font-size:14.8px;font-weight:bold;line-height:18px;color:#414141;transform:scaleX(1.0185);">My suite</div>
<div class="tx" id="n2" style="left:247.60px;top:35.70px;font-size:14.8px;font-weight:bold;line-height:18px;color:#414141;transform:scaleX(0.9672);">Results</div>
<div class="tx" id="back" style="left:37.00px;top:82.20px;font-size:11.5px;font-weight:normal;line-height:15px;color:#b8384b;transform:scaleX(0.9070);">Back</div>
<div class="tx" id="c1t" style="left:25.75px;top:124.25px;font-size:12.8px;font-weight:normal;line-height:16px;color:#444;transform:scaleX(0.9625);">Video Editing Benchmark - GPU Accelerated</div>
<div class="tx" id="score" style="left:110.00px;top:174.00px;font-size:32px;font-weight:bold;line-height:36px;color:#111;transform:scaleX(0.9579);">37 919</div>
<div class="tx" id="cpul" style="left:31.70px;top:259.20px;font-size:11.8px;font-weight:bold;line-height:16px;color:#444;transform:scaleX(0.8875);">CPU:</div>
<div class="tx" id="gpul" style="left:31.70px;top:340.10px;font-size:11.8px;font-weight:bold;line-height:16px;color:#444;transform:scaleX(0.8847);">GPU:</div>
<div class="tx" id="cpu1" style="left:103.30px;top:245.80px;font-size:12px;font-weight:bold;line-height:18.7px;color:#444;transform:scaleX(0.9284);">AMD Ryzen AI 9 HX 370 w/<br>Radeon 890M</div>
<div class="tx" id="gpu1" style="left:103.30px;top:301.80px;font-size:12px;font-weight:bold;line-height:18.4px;color:#444;transform:scaleX(0.9292);">AMD Radeon(TM) 890M<br>Graphics</div>
<div class="tx" id="gpu2" style="left:103.30px;top:351.50px;font-size:12px;font-weight:bold;line-height:18.7px;color:#444;transform:scaleX(0.9171);">NVIDIA GeForce RTX 5070<br>Laptop GPU</div>
<div class="tx" id="c2t" style="left:317.80px;top:124.20px;font-size:12.8px;font-weight:normal;line-height:16px;color:#333;transform:scaleX(0.9709);">Application versions</div>
<div class="tx" id="ap1" style="left:330.00px;top:157.50px;font-size:11.5px;font-weight:bold;line-height:12.5px;color:#222;transform:scaleX(0.9386);">Adobe® Premiere®<br>Pro</div>
<div class="tx" id="av1" style="left:448.00px;top:161.80px;font-size:12.3px;font-weight:normal;line-height:16px;color:#5a5a5a;transform:scaleX(0.9831);">25.2.3.4</div>
<div class="tx" id="ap2" style="left:330.00px;top:213.30px;font-size:11.5px;font-weight:bold;line-height:12.5px;color:#222;transform:scaleX(0.9138);">Workload version</div>
<div class="tx" id="av2" style="left:448.60px;top:211.30px;font-size:12.3px;font-weight:normal;line-height:16px;color:#5a5a5a;transform:scaleX(0.9695);">1.2.411</div>
<div class="tx" id="ds" style="left:13.70px;top:426.80px;font-size:12.8px;font-weight:normal;line-height:16px;color:#555;transform:scaleX(0.9444);">Detailed scores</div>
<div class="tx" id="d0" style="left:25.75px;top:474.00px;font-size:13px;font-weight:bold;line-height:18.5px;color:#1a1a1a;transform:scaleX(0.8902);">Video Editing Export score -<br>GPU Accelerated</div>
<div class="tx" id="dv0" style="left:208.75px;top:473.75px;font-size:12px;font-weight:bold;line-height:16px;color:#444;transform:scaleX(1.0013);">37 919</div>
<div class="tx" id="d1" style="left:25.75px;top:529.50px;font-size:11.8px;font-weight:normal;line-height:15.75px;color:#222;transform:scaleX(0.9385);">Export H.264 (YouTube 1080p<br>Full HD) 1/2 - GPU Accelerated</div>
<div class="tx" id="dv1" style="left:208.75px;top:528.50px;font-size:12px;font-weight:bold;line-height:16px;color:#444;transform:scaleX(0.9097);">31.8</div>
<div class="tx" id="d2" style="left:423.30px;top:529.50px;font-size:11.8px;font-weight:normal;line-height:15.75px;color:#222;transform:scaleX(0.9401);">Export H.264 (YouTube 1080p<br>Full HD) 2/2</div>
<div class="tx" id="dv2" style="left:606.70px;top:528.50px;font-size:12px;font-weight:bold;line-height:16px;color:#444;transform:scaleX(0.9076);">26.3</div>
<div class="tx" id="d3" style="left:821.70px;top:529.50px;font-size:11.8px;font-weight:normal;line-height:15.75px;color:#222;transform:scaleX(0.9658);">Export H.265 (4K UHD) 1/2 -<br>GPU Accelerated</div>
<div class="tx" id="dv3" style="left:1004.00px;top:528.50px;font-size:12px;font-weight:bold;line-height:16px;color:#444;transform:scaleX(0.9204);">65.5</div>
<div class="tx" id="d4" style="left:25.75px;top:579.50px;font-size:11.8px;font-weight:normal;line-height:15.75px;color:#222;transform:scaleX(0.9655);">Export H.265 (4K UHD) 2/2</div>
<div class="tx" id="dv4" style="left:208.75px;top:578.50px;font-size:12px;font-weight:bold;line-height:16px;color:#444;transform:scaleX(0.8883);">53.1</div>
<div class="tx" id="ad" style="left:25.75px;top:638.50px;font-size:12.8px;font-weight:normal;line-height:16px;color:#222;transform:scaleX(0.9792);">Additional details</div>
<div class="tx" id="ps" style="left:25.75px;top:672.00px;font-size:11.8px;font-weight:normal;line-height:15.75px;color:#222;transform:scaleX(0.9185);">Power source</div>
<div class="tx" id="pv" style="left:208.75px;top:671.00px;font-size:12px;font-weight:bold;line-height:16px;color:#444;transform:scaleX(0.9047);">Plugged in</div>
<div class="tx" id="f1" style="left:379.30px;top:721.30px;font-size:11.8px;font-weight:normal;line-height:14px;color:#555;transform:scaleX(0.9405);">Publish</div>
<div class="tx" id="f2" style="left:458.30px;top:721.30px;font-size:11.8px;font-weight:normal;line-height:14px;color:#555;transform:scaleX(0.9478);">Show log</div>
<div class="tx" id="f3" style="left:546.70px;top:721.30px;font-size:11.8px;font-weight:normal;line-height:14px;color:#555;transform:scaleX(0.9192);">Export as File</div>
<div class="tx" id="f4" style="left:656.70px;top:721.30px;font-size:11.8px;font-weight:normal;line-height:14px;color:#555;transform:scaleX(0.8996);">Export as PDF</div>
<div class="tx" id="f5" style="left:768.90px;top:721.30px;font-size:11.8px;font-weight:normal;line-height:14px;color:#555;transform:scaleX(0.9060);">Export as XML</div>
<svg class="abs" style="left:361px;top:722px" width="12" height="12" viewBox="0 0 12 12"><path d="M3 10a2.6 2.6 0 0 1-.5-5.1A3.4 3.4 0 0 1 9 4.3 2.9 2.9 0 0 1 9.3 10z" fill="#444"/><path d="M6 5l2 2.2H6.7V9H5.3V7.2H4z" fill="#fff"/></svg>
<svg class="abs" style="left:442px;top:721px" width="10" height="13" viewBox="0 0 10 13"><path d="M1 1h5l3 3v8H1z" fill="none" stroke="#444" stroke-width="1.1"/><path d="M3 6.5h4M3 8.5h4" stroke="#444" stroke-width="1"/></svg>
<svg class="abs" style="left:529px;top:721px" width="12" height="13" viewBox="0 0 12 13"><path d="M4.6 1h2.8v3.6H9.6L6 8.2 2.4 4.600H4.600z" fill="#444"/><path d="M0.500 8.500h3l1.500 1.500h2l1.500-1.500h3v3.500h-11z" fill="#444"/></svg>
<svg class="abs" style="left:639px;top:722px" width="11" height="11" viewBox="0 0 11 11"><path d="M1.500 0.500h6.500l2.500 2.500v6.500a1 1 0 0 1-1 1h-8a1 1 0 0 1-1-1v-8a1 1 0 0 1 1-1z" fill="#333"/><rect x="2.200" y="1.800" width="4.800" height="2.400" fill="#fff"/><circle cx="5.500" cy="7.300" r="1.500" fill="#fff"/></svg>
<svg class="abs" style="left:750px;top:721px" width="12" height="13" viewBox="0 0 12 13"><path d="M4.6 1h2.8v3.6H9.6L6 8.2 2.4 4.600H4.600z" fill="#444"/><path d="M0.500 8.500h3l1.500 1.500h2l1.500-1.500h3v3.500h-11z" fill="#444"/></svg>
</body>
</html>
